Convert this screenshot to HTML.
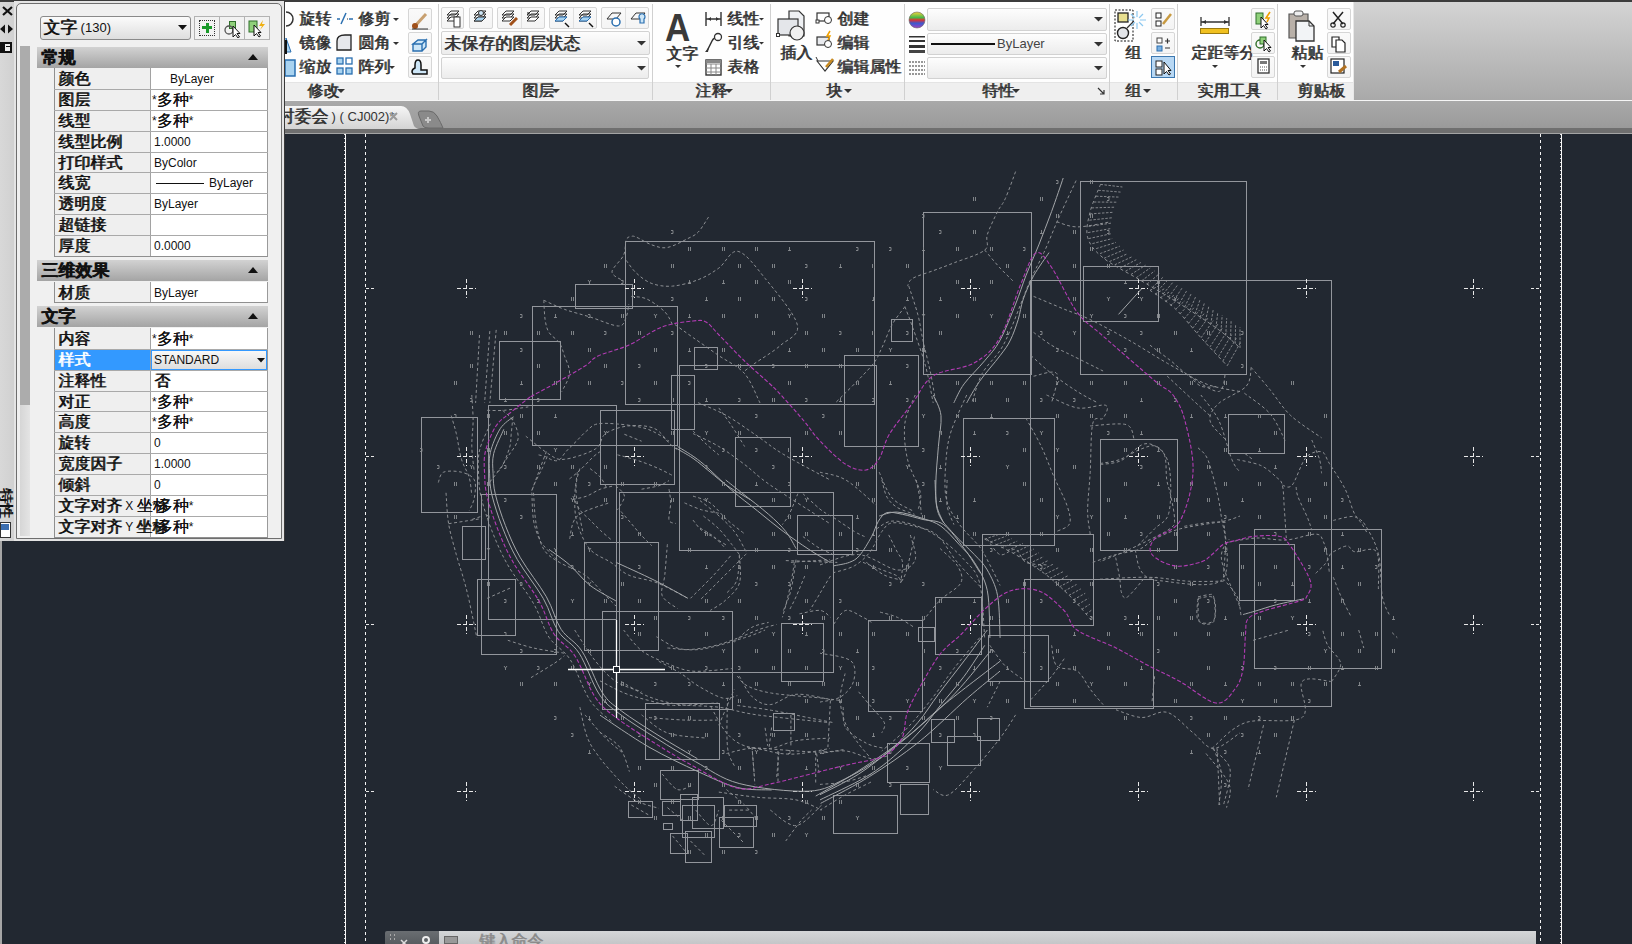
<!DOCTYPE html><html><head><meta charset="utf-8"><style>
*{margin:0;padding:0;box-sizing:border-box}
html,body{width:1632px;height:944px;overflow:hidden;background:#222831;font-family:"Liberation Sans",sans-serif;font-size:12px;color:#222}
.a{position:absolute}
.t{position:absolute;white-space:nowrap;line-height:1}
.c{font-size:1.34em;line-height:0;text-shadow:0.6px 0 0 currentColor;position:relative;top:1px}
</style></head><body>
<div class="a" style="left:0;top:134px;width:1632px;height:810px;background:#222831"></div><svg class="a" style="left:0;top:0" width="1632" height="944" viewBox="0 0 1632 944"><rect x="625.5" y="241.5" width="249" height="163" fill="none" stroke="#93969c" stroke-width="1"/><rect x="575.5" y="284.5" width="57" height="24" fill="none" stroke="#93969c" stroke-width="1"/><rect x="532.5" y="306.5" width="145" height="139" fill="none" stroke="#93969c" stroke-width="1"/><rect x="499.5" y="341.5" width="61" height="58" fill="none" stroke="#93969c" stroke-width="1"/><rect x="421.5" y="417.5" width="56" height="95" fill="none" stroke="#93969c" stroke-width="1"/><rect x="488.5" y="405.5" width="128" height="214" fill="none" stroke="#93969c" stroke-width="1"/><rect x="600.5" y="410.5" width="74" height="74" fill="none" stroke="#93969c" stroke-width="1"/><rect x="694.5" y="347.5" width="23" height="22" fill="none" stroke="#93969c" stroke-width="1"/><rect x="671.5" y="375.5" width="23" height="54" fill="none" stroke="#93969c" stroke-width="1"/><rect x="679.5" y="365.5" width="197" height="185" fill="none" stroke="#93969c" stroke-width="1"/><rect x="735.5" y="437.5" width="55" height="69" fill="none" stroke="#93969c" stroke-width="1"/><rect x="923.5" y="212.5" width="108" height="162" fill="none" stroke="#93969c" stroke-width="1"/><rect x="1080.5" y="181.5" width="166" height="193" fill="none" stroke="#93969c" stroke-width="1"/><rect x="1083.5" y="266.5" width="75" height="55" fill="none" stroke="#93969c" stroke-width="1"/><rect x="1030.5" y="280.5" width="301" height="426" fill="none" stroke="#93969c" stroke-width="1"/><rect x="891.5" y="319.5" width="21" height="22" fill="none" stroke="#93969c" stroke-width="1"/><rect x="844.5" y="355.5" width="74" height="91" fill="none" stroke="#93969c" stroke-width="1"/><rect x="481.5" y="494.5" width="75" height="160" fill="none" stroke="#93969c" stroke-width="1"/><rect x="462.5" y="526.5" width="23" height="33" fill="none" stroke="#93969c" stroke-width="1"/><rect x="477.5" y="579.5" width="38" height="56" fill="none" stroke="#93969c" stroke-width="1"/><rect x="619.5" y="492.5" width="214" height="180" fill="none" stroke="#93969c" stroke-width="1"/><rect x="584.5" y="542.5" width="74" height="108" fill="none" stroke="#93969c" stroke-width="1"/><rect x="602.5" y="611.5" width="130" height="98" fill="none" stroke="#93969c" stroke-width="1"/><rect x="797.5" y="515.5" width="55" height="39" fill="none" stroke="#93969c" stroke-width="1"/><rect x="781.5" y="623.5" width="42" height="58" fill="none" stroke="#93969c" stroke-width="1"/><rect x="963.5" y="418.5" width="91" height="127" fill="none" stroke="#93969c" stroke-width="1"/><rect x="1100.5" y="439.5" width="77" height="111" fill="none" stroke="#93969c" stroke-width="1"/><rect x="982.5" y="534.5" width="111" height="91" fill="none" stroke="#93969c" stroke-width="1"/><rect x="1024.5" y="579.5" width="129" height="129" fill="none" stroke="#93969c" stroke-width="1"/><rect x="935.5" y="597.5" width="46" height="57" fill="none" stroke="#93969c" stroke-width="1"/><rect x="868.5" y="620.5" width="54" height="91" fill="none" stroke="#93969c" stroke-width="1"/><rect x="918.5" y="627.5" width="16" height="14" fill="none" stroke="#93969c" stroke-width="1"/><rect x="988.5" y="635.5" width="60" height="46" fill="none" stroke="#93969c" stroke-width="1"/><rect x="1228.5" y="414.5" width="56" height="39" fill="none" stroke="#93969c" stroke-width="1"/><rect x="1254.5" y="529.5" width="127" height="139" fill="none" stroke="#93969c" stroke-width="1"/><rect x="1239.5" y="544.5" width="55" height="56" fill="none" stroke="#93969c" stroke-width="1"/><rect x="645.5" y="703.5" width="74" height="56" fill="none" stroke="#93969c" stroke-width="1"/><rect x="773.5" y="713.5" width="21" height="17" fill="none" stroke="#93969c" stroke-width="1"/><rect x="660.5" y="770.5" width="38" height="29" fill="none" stroke="#93969c" stroke-width="1"/><rect x="628.5" y="801.5" width="24" height="16" fill="none" stroke="#93969c" stroke-width="1"/><rect x="662.5" y="801.5" width="18" height="14" fill="none" stroke="#93969c" stroke-width="1"/><rect x="680.5" y="794.5" width="17" height="26" fill="none" stroke="#93969c" stroke-width="1"/><rect x="682.5" y="805.5" width="32" height="32" fill="none" stroke="#93969c" stroke-width="1"/><rect x="692.5" y="797.5" width="31" height="31" fill="none" stroke="#93969c" stroke-width="1"/><rect x="724.5" y="805.5" width="32" height="21" fill="none" stroke="#93969c" stroke-width="1"/><rect x="719.5" y="817.5" width="34" height="30" fill="none" stroke="#93969c" stroke-width="1"/><rect x="663.5" y="823.5" width="9" height="6" fill="none" stroke="#93969c" stroke-width="1"/><rect x="670.5" y="833.5" width="17" height="20" fill="none" stroke="#93969c" stroke-width="1"/><rect x="685.5" y="831.5" width="26" height="31" fill="none" stroke="#93969c" stroke-width="1"/><rect x="931.5" y="719.5" width="23" height="23" fill="none" stroke="#93969c" stroke-width="1"/><rect x="977.5" y="718.5" width="22" height="22" fill="none" stroke="#93969c" stroke-width="1"/><rect x="947.5" y="736.5" width="33" height="29" fill="none" stroke="#93969c" stroke-width="1"/><rect x="887.5" y="743.5" width="42" height="39" fill="none" stroke="#93969c" stroke-width="1"/><rect x="900.5" y="784.5" width="28" height="30" fill="none" stroke="#93969c" stroke-width="1"/><rect x="833.5" y="795.5" width="64" height="38" fill="none" stroke="#93969c" stroke-width="1"/><path d="M457 288.5H476M466.5 279V298" stroke="#e8e8e8" stroke-width="1" stroke-dasharray="4 2" fill="none"/><path d="M625 288.5H644M634.5 279V298" stroke="#e8e8e8" stroke-width="1" stroke-dasharray="4 2" fill="none"/><path d="M793 288.5H812M802.5 279V298" stroke="#e8e8e8" stroke-width="1" stroke-dasharray="4 2" fill="none"/><path d="M961 288.5H980M970.5 279V298" stroke="#e8e8e8" stroke-width="1" stroke-dasharray="4 2" fill="none"/><path d="M1129 288.5H1148M1138.5 279V298" stroke="#e8e8e8" stroke-width="1" stroke-dasharray="4 2" fill="none"/><path d="M1297 288.5H1316M1306.5 279V298" stroke="#e8e8e8" stroke-width="1" stroke-dasharray="4 2" fill="none"/><path d="M1464 288.5H1483M1473.5 279V298" stroke="#e8e8e8" stroke-width="1" stroke-dasharray="4 2" fill="none"/><path d="M457 456.5H476M466.5 447V466" stroke="#e8e8e8" stroke-width="1" stroke-dasharray="4 2" fill="none"/><path d="M625 456.5H644M634.5 447V466" stroke="#e8e8e8" stroke-width="1" stroke-dasharray="4 2" fill="none"/><path d="M793 456.5H812M802.5 447V466" stroke="#e8e8e8" stroke-width="1" stroke-dasharray="4 2" fill="none"/><path d="M961 456.5H980M970.5 447V466" stroke="#e8e8e8" stroke-width="1" stroke-dasharray="4 2" fill="none"/><path d="M1129 456.5H1148M1138.5 447V466" stroke="#e8e8e8" stroke-width="1" stroke-dasharray="4 2" fill="none"/><path d="M1297 456.5H1316M1306.5 447V466" stroke="#e8e8e8" stroke-width="1" stroke-dasharray="4 2" fill="none"/><path d="M1464 456.5H1483M1473.5 447V466" stroke="#e8e8e8" stroke-width="1" stroke-dasharray="4 2" fill="none"/><path d="M457 624.5H476M466.5 615V634" stroke="#e8e8e8" stroke-width="1" stroke-dasharray="4 2" fill="none"/><path d="M625 624.5H644M634.5 615V634" stroke="#e8e8e8" stroke-width="1" stroke-dasharray="4 2" fill="none"/><path d="M793 624.5H812M802.5 615V634" stroke="#e8e8e8" stroke-width="1" stroke-dasharray="4 2" fill="none"/><path d="M961 624.5H980M970.5 615V634" stroke="#e8e8e8" stroke-width="1" stroke-dasharray="4 2" fill="none"/><path d="M1129 624.5H1148M1138.5 615V634" stroke="#e8e8e8" stroke-width="1" stroke-dasharray="4 2" fill="none"/><path d="M1297 624.5H1316M1306.5 615V634" stroke="#e8e8e8" stroke-width="1" stroke-dasharray="4 2" fill="none"/><path d="M1464 624.5H1483M1473.5 615V634" stroke="#e8e8e8" stroke-width="1" stroke-dasharray="4 2" fill="none"/><path d="M457 791.5H476M466.5 782V801" stroke="#e8e8e8" stroke-width="1" stroke-dasharray="4 2" fill="none"/><path d="M625 791.5H644M634.5 782V801" stroke="#e8e8e8" stroke-width="1" stroke-dasharray="4 2" fill="none"/><path d="M793 791.5H812M802.5 782V801" stroke="#e8e8e8" stroke-width="1" stroke-dasharray="4 2" fill="none"/><path d="M961 791.5H980M970.5 782V801" stroke="#e8e8e8" stroke-width="1" stroke-dasharray="4 2" fill="none"/><path d="M1129 791.5H1148M1138.5 782V801" stroke="#e8e8e8" stroke-width="1" stroke-dasharray="4 2" fill="none"/><path d="M1297 791.5H1316M1306.5 782V801" stroke="#e8e8e8" stroke-width="1" stroke-dasharray="4 2" fill="none"/><path d="M1464 791.5H1483M1473.5 782V801" stroke="#e8e8e8" stroke-width="1" stroke-dasharray="4 2" fill="none"/><path d="M366 288.5H375M1531 288.5H1540" stroke="#e8e8e8" stroke-width="1" stroke-dasharray="3 2" fill="none"/><path d="M366 456.5H375M1531 456.5H1540" stroke="#e8e8e8" stroke-width="1" stroke-dasharray="3 2" fill="none"/><path d="M366 624.5H375M1531 624.5H1540" stroke="#e8e8e8" stroke-width="1" stroke-dasharray="3 2" fill="none"/><path d="M366 791.5H375M1531 791.5H1540" stroke="#e8e8e8" stroke-width="1" stroke-dasharray="3 2" fill="none"/><path d="M345.5 134V944M1561.5 134V944" stroke="#f8f8f8" stroke-width="1"/><path d="M344.5 134V944M1560.5 134V944" stroke="#e0e0e0" stroke-width="1" stroke-dasharray="1 3"/><path d="M365.5 134V944M1540.5 134V944" stroke="#f4f4f4" stroke-width="1" stroke-dasharray="3 3"/><path d="M708.5 217.1 C706.8 219.6 701.7 228.5 698.2 232.1 C694.8 235.6 693.1 235.9 687.9 238.5 C682.8 241.1 673.4 246.4 667.4 247.5 C661.3 248.6 657.1 246.6 651.9 244.9 C646.8 243.2 639.9 238.6 636.5 237.2 C633.0 235.8 633.0 236.0 631.3 236.4 C629.6 236.9 627.5 236.6 626.2 239.8 C624.9 242.9 626.0 249.9 623.6 255.2 C621.2 260.6 612.0 267.7 612.0 271.9 C612.0 276.2 621.7 279.5 623.6 281.0" fill="none" stroke="#8d9094" stroke-width="1" stroke-dasharray="3 2.5"/><path d="M626.2 260.4 C627.9 262.5 632.2 269.4 636.5 273.2 C640.8 277.1 645.9 281.4 651.9 283.5 C657.9 285.7 664.8 286.7 672.5 286.1 C680.2 285.5 690.5 282.7 698.2 279.7 C706.0 276.7 712.2 272.8 718.8 268.1 C725.5 263.4 730.4 249.6 738.1 251.4 C745.8 253.1 755.3 266.2 765.1 278.4 C775.0 290.6 794.7 313.6 797.3 324.7 C799.9 335.9 787.7 338.9 780.6 345.3 C773.5 351.7 760.9 359.0 754.9 363.3 C748.8 367.6 746.3 369.7 744.6 371.0" fill="none" stroke="#8d9094" stroke-width="1" stroke-dasharray="3 2.5"/><path d="M543.8 300.3 C547.3 301.8 556.7 306.5 564.4 309.3 C572.1 312.1 581.1 314.2 590.1 317.0 C599.2 319.8 612.5 326.0 618.5 326.0 C624.5 326.0 624.5 320.6 626.2 317.0 C627.9 313.3 628.3 306.3 628.8 304.1" fill="none" stroke="#8d9094" stroke-width="1" stroke-dasharray="3 2.5"/><path d="M543.8 300.3 C544.0 303.5 544.3 314.2 545.1 319.6 C546.0 324.9 546.6 328.6 549.0 332.4 C551.3 336.3 556.7 338.9 559.3 342.7 C561.8 346.6 562.7 350.4 564.4 355.6 C566.1 360.7 570.0 367.6 569.6 373.6 C569.1 379.6 563.1 388.6 561.8 391.6" fill="none" stroke="#8d9094" stroke-width="1" stroke-dasharray="3 2.5"/><path d="M479.5 335.0 L475.6 402.9" fill="none" stroke="#8d9094" stroke-width="1" stroke-dasharray="3 2.5"/><path d="M489.8 331.1 L484.6 402.9" fill="none" stroke="#8d9094" stroke-width="1" stroke-dasharray="3 2.5"/><path d="M496.2 329.9 C495.6 337.1 493.4 361.4 492.4 373.6 C491.3 385.8 490.2 398.1 489.8 402.9" fill="none" stroke="#8d9094" stroke-width="1" stroke-dasharray="3 2.5"/><path d="M675.1 324.7 C678.1 326.9 685.8 332.4 693.1 337.6 C700.4 342.7 710.2 349.6 718.8 355.6 C727.4 361.6 737.7 365.7 744.6 373.6 C751.4 381.5 757.4 398.1 760.0 402.9" fill="none" stroke="#8d9094" stroke-width="1" stroke-dasharray="3 2.5"/><path d="M631.3 296.4 C633.9 296.8 641.2 296.4 646.8 299.0 C652.3 301.5 660.5 307.5 664.8 311.8 C669.1 316.1 671.2 322.6 672.5 324.7" fill="none" stroke="#8d9094" stroke-width="1" stroke-dasharray="3 2.5"/><path d="M1063.2 178.0 C1061.3 183.6 1055.7 200.3 1051.6 211.5 C1047.5 222.6 1043.0 234.2 1038.8 244.9 C1034.5 255.6 1029.7 265.9 1025.9 275.8 C1022.0 285.7 1019.9 293.4 1015.6 304.1 C1011.3 314.8 1005.3 330.7 1000.1 340.1 C995.0 349.6 990.7 353.4 984.7 360.7 C978.7 368.0 969.3 376.9 964.1 383.9 C959.0 390.9 955.5 399.8 953.8 402.9" fill="none" stroke="#a4a7aa" stroke-width="1"/><path d="M1049.0 252.6 C1046.5 256.5 1037.9 268.1 1033.6 275.8 C1029.3 283.5 1025.9 291.7 1023.3 299.0 C1020.7 306.3 1020.3 312.7 1018.2 319.6 C1016.0 326.4 1013.4 334.1 1010.4 340.1 C1007.4 346.2 1005.3 348.7 1000.1 355.6 C995.0 362.5 985.1 373.4 979.6 381.3 C974.0 389.2 968.8 399.3 966.7 402.9" fill="none" stroke="#a4a7aa" stroke-width="1"/><path d="M1076.1 180.6 C1073.3 186.6 1064.7 204.6 1059.3 216.6 C1054.0 228.6 1048.6 242.4 1043.9 252.6 C1039.2 262.9 1034.9 269.8 1031.0 278.4 C1027.2 287.0 1024.2 295.5 1020.7 304.1 C1017.3 312.7 1013.9 322.1 1010.4 329.9 C1007.0 337.6 1004.9 343.1 1000.1 350.4 C995.4 357.7 986.9 364.9 982.1 373.6 C977.4 382.4 973.6 398.1 971.8 402.9" fill="none" stroke="#8d9094" stroke-width="1" stroke-dasharray="3 2.5"/><path d="M1015.6 171.6 C1013.9 176.1 1008.3 192.0 1005.3 198.6 C1002.3 205.3 1000.6 205.5 997.6 211.5 C994.6 217.5 989.4 228.2 987.3 234.6 C985.1 241.1 990.3 245.4 984.7 250.1 C979.1 254.8 962.4 259.5 953.8 262.9 C945.2 266.4 940.1 268.1 933.2 270.7 C926.4 273.2 916.9 275.8 912.6 278.4 C908.4 281.0 908.4 284.8 907.5 286.1" fill="none" stroke="#8d9094" stroke-width="1" stroke-dasharray="3 2.5"/><path d="M984.7 250.1 C987.3 253.1 995.4 262.9 1000.1 268.1 C1004.9 273.2 1010.9 278.8 1013.0 281.0" fill="none" stroke="#8d9094" stroke-width="1" stroke-dasharray="3 2.5"/><path d="M908.8 286.1 C910.3 290.8 915.4 305.4 917.8 314.4 C920.2 323.4 920.8 330.3 922.9 340.1 C925.1 350.0 928.5 363.1 930.7 373.6 C932.8 384.1 935.0 398.1 935.8 402.9" fill="none" stroke="#8d9094" stroke-width="1" stroke-dasharray="3 2.5"/><path d="M904.9 306.7 C906.2 310.1 909.2 317.4 912.6 327.3 C916.1 337.1 922.1 353.3 925.5 365.9 C928.9 378.5 931.9 396.8 933.2 402.9" fill="none" stroke="#8d9094" stroke-width="1" stroke-dasharray="3 2.5"/><path d="M904.9 306.7 C902.8 309.7 895.9 317.8 892.1 324.7 C888.2 331.6 885.2 341.0 881.8 347.9 C878.3 354.7 879.2 356.7 871.5 365.9 C863.8 375.1 841.4 396.8 835.4 402.9" fill="none" stroke="#8d9094" stroke-width="1" stroke-dasharray="3 2.5"/><path d="M1033.6 296.4 C1038.8 298.5 1055.0 305.4 1064.5 309.3 C1073.9 313.1 1079.5 314.4 1090.2 319.6 C1100.9 324.7 1116.0 332.9 1128.8 340.1 C1141.7 347.4 1154.6 356.0 1167.4 363.3 C1180.3 370.6 1193.9 379.2 1206.0 383.9 C1218.1 388.6 1234.3 390.3 1240.0 391.6" fill="none" stroke="#8d9094" stroke-width="1" stroke-dasharray="3 2.5"/><path d="M1056.8 221.8 C1060.2 222.6 1068.3 226.9 1077.4 226.9 C1086.4 226.9 1105.2 222.6 1110.8 221.8" fill="none" stroke="#8d9094" stroke-width="1" stroke-dasharray="3 2.5"/><path d="M1033.6 332.4 C1036.6 334.6 1045.2 341.4 1051.6 345.3 C1058.1 349.2 1063.6 351.3 1072.2 355.6 C1080.8 359.9 1097.9 368.5 1103.1 371.0" fill="none" stroke="#8d9094" stroke-width="1" stroke-dasharray="3 2.5"/><path d="M1031.0 355.6 C1034.5 358.6 1043.9 367.6 1051.6 373.6 C1059.3 379.6 1069.6 386.7 1077.4 391.6 C1085.1 396.5 1094.5 401.1 1097.9 402.9" fill="none" stroke="#8d9094" stroke-width="1" stroke-dasharray="3 2.5"/><path d="M1033.6 376.2 C1037.5 375.7 1053.8 369.1 1056.8 373.6 C1059.8 378.1 1052.5 398.1 1051.6 402.9" fill="none" stroke="#8d9094" stroke-width="1" stroke-dasharray="3 2.5"/><path d="M1118.5 314.4 L1141.7 288.7" fill="none" stroke="#a4a7aa" stroke-width="1"/><path d="M1100.5 184.4L1122.4 187.0M1098.3 190.3L1120.5 192.1M1096.0 196.2L1118.7 197.1M1093.8 202.0L1116.8 202.2M1091.6 207.9L1114.9 207.2M1090.0 213.9L1113.3 212.3M1089.4 220.2L1112.8 217.7M1088.7 226.4L1112.2 223.0M1088.1 232.6L1111.7 228.4M1088.7 238.6L1111.2 233.7M1092.4 243.6L1112.2 238.6M1096.2 248.6L1116.0 242.4M1100.0 253.6L1119.8 246.2M1104.0 258.3L1123.6 250.0M1109.4 261.6L1127.4 253.8M1114.7 264.8L1131.7 256.9M1120.1 268.0L1136.3 259.7M1125.5 271.2L1140.9 262.5M1130.9 274.5L1145.5 265.2M1136.3 277.7L1150.2 268.0M1141.6 280.9L1154.8 270.8M1147.0 284.2L1159.4 273.6M1152.4 287.4L1164.0 276.3M1157.8 290.6L1168.6 279.2M1163.2 293.8L1173.1 282.1M1168.5 297.1L1177.5 285.1M1173.9 300.3L1182.0 288.1M1179.3 303.5L1186.5 291.1M1184.6 307.0L1191.0 294.1M1189.8 310.4L1195.5 297.1M1195.0 313.9L1199.9 300.1M1200.2 317.4L1204.4 303.0M1205.4 320.9L1208.9 306.1M1210.7 324.4L1213.3 309.1M1215.9 327.8L1217.8 312.1M1220.9 331.6L1222.2 315.2M1225.7 335.6L1226.7 318.2M1230.5 339.7L1231.1 321.2M1235.2 343.8L1235.6 324.2M1240.0 347.9L1240.0 327.3" fill="none" stroke="#8d9094" stroke-width="0.9" stroke-dasharray="2.5 1.5"/><path d="M1100.5 184.4 C1098.8 189.0 1092.4 202.7 1090.2 211.5 C1088.1 220.3 1085.5 229.5 1087.6 237.2 C1089.8 244.9 1094.1 250.5 1103.1 257.8 C1112.1 265.1 1128.8 273.2 1141.7 281.0 C1154.6 288.7 1167.4 296.0 1180.3 304.1 C1193.2 312.3 1208.9 322.6 1218.9 329.9 C1228.8 337.1 1236.5 344.9 1240.0 347.9" fill="none" stroke="#8d9094" stroke-width="1" stroke-dasharray="3 3"/><path d="M471.8 395.0 C472.0 399.3 473.1 412.2 473.1 420.7 C473.1 429.3 471.6 437.9 471.8 446.5 C472.0 455.0 473.9 467.9 474.3 472.2" fill="none" stroke="#8d9094" stroke-width="1" stroke-dasharray="3 2.5"/><path d="M451.2 415.6 C452.0 418.6 454.6 426.3 456.3 433.6 C458.0 440.9 459.3 452.0 461.5 459.3 C463.6 466.6 467.5 471.3 469.2 477.4 C470.9 483.4 471.3 492.4 471.8 495.4" fill="none" stroke="#8d9094" stroke-width="1" stroke-dasharray="3 2.5"/><path d="M438.3 482.5 C439.2 480.8 439.6 473.9 443.5 472.2 C447.3 470.5 456.3 470.9 461.5 472.2 C466.6 473.5 472.2 475.6 474.3 479.9 C476.5 484.2 475.2 492.8 474.3 497.9 C473.5 503.1 470.0 508.7 469.2 510.8" fill="none" stroke="#8d9094" stroke-width="1" stroke-dasharray="3 2.5"/><path d="M448.6 523.7 L482.1 518.5" fill="none" stroke="#8d9094" stroke-width="1" stroke-dasharray="3 2.5"/><path d="M446.0 492.8 C446.5 497.9 446.9 513.4 448.6 523.7 C450.3 534.0 453.8 545.1 456.3 554.6 C458.9 564.0 461.9 572.6 464.0 580.3 C466.2 588.0 467.0 591.3 469.2 600.9 C471.3 610.5 475.6 631.8 476.9 637.9" fill="none" stroke="#8d9094" stroke-width="1" stroke-dasharray="3 2.5"/><path d="M502.6 410.4 C504.4 412.2 510.4 416.0 512.9 420.7 C515.5 425.5 518.9 432.7 518.1 438.8 C517.2 444.8 511.2 451.2 507.8 456.8 C504.4 462.3 500.9 467.5 497.5 472.2 C494.1 476.9 488.9 482.9 487.2 485.1" fill="none" stroke="#8d9094" stroke-width="1" stroke-dasharray="3 2.5"/><path d="M546.4 451.6 C545.1 455.0 541.2 465.3 538.7 472.2 C536.1 479.1 532.2 489.4 531.0 492.8" fill="none" stroke="#8d9094" stroke-width="1" stroke-dasharray="3 2.5"/><path d="M525.8 436.2 C529.7 439.2 542.5 450.3 549.0 454.2 C555.4 458.1 556.7 460.2 564.4 459.3 C572.1 458.5 588.4 453.3 595.3 449.0 C602.2 444.8 600.0 437.5 605.6 433.6 C611.2 429.7 620.6 426.7 628.8 425.9 C636.9 425.0 647.6 425.5 654.5 428.5 C661.3 431.5 665.6 440.0 669.9 443.9 C674.2 447.8 678.5 450.3 680.2 451.6" fill="none" stroke="#8d9094" stroke-width="1" stroke-dasharray="3 2.5"/><path d="M577.3 472.2 C576.9 476.5 574.7 489.4 574.7 497.9 C574.7 506.5 574.7 515.1 577.3 523.7 C579.9 532.3 584.6 543.0 590.1 549.4 C595.7 555.8 604.3 558.0 610.7 562.3 C617.2 566.6 621.0 571.7 628.8 575.1 C636.5 578.6 647.2 579.0 657.1 582.9 C666.9 586.7 682.8 595.7 687.9 598.3" fill="none" stroke="#8d9094" stroke-width="1" stroke-dasharray="3 2.5"/><path d="M533.5 492.8 C534.0 497.9 534.4 514.2 536.1 523.7 C537.8 533.1 540.0 543.0 543.8 549.4 C547.7 555.8 552.4 558.0 559.3 562.3 C566.1 566.6 577.3 569.6 585.0 575.1 C592.7 580.7 600.4 590.6 605.6 595.7 C610.7 600.9 614.2 604.3 615.9 606.0" fill="none" stroke="#8d9094" stroke-width="1" stroke-dasharray="3 2.5"/><path d="M608.2 503.1 C603.0 505.2 583.7 510.0 577.3 516.0 C570.8 522.0 570.8 535.3 569.6 539.1" fill="none" stroke="#8d9094" stroke-width="1" stroke-dasharray="3 2.5"/><path d="M693.1 433.6 C697.4 435.7 710.2 441.3 718.8 446.5 C727.4 451.6 736.0 458.1 744.6 464.5 C753.1 470.9 756.1 475.2 770.3 485.1 C784.5 494.9 820.0 517.2 830.0 523.7" fill="none" stroke="#8d9094" stroke-width="1" stroke-dasharray="3 2.5"/><path d="M698.2 402.7 C703.0 404.9 716.7 410.0 726.5 415.6 C736.4 421.2 748.0 429.7 757.4 436.2 C766.9 442.6 771.1 446.9 783.2 454.2 C795.3 461.5 822.2 475.6 830.0 479.9" fill="none" stroke="#8d9094" stroke-width="1" stroke-dasharray="3 2.5"/><path d="M667.4 544.3 C666.9 549.4 665.6 566.6 664.8 575.1 C663.9 583.7 660.1 590.2 662.2 595.7 C664.4 601.3 675.1 606.5 677.6 608.6" fill="none" stroke="#8d9094" stroke-width="1" stroke-dasharray="3 2.5"/><path d="M739.4 554.6 C739.0 558.8 739.0 573.9 736.8 580.3 C734.7 586.7 728.3 591.0 726.5 593.2" fill="none" stroke="#8d9094" stroke-width="1" stroke-dasharray="3 2.5"/><path d="M796.0 559.7 C795.2 564.9 793.0 582.0 790.9 590.6 C788.7 599.2 784.4 607.7 783.2 611.2" fill="none" stroke="#8d9094" stroke-width="1" stroke-dasharray="3 2.5"/><path d="M790.9 562.3 L830.0 559.7" fill="none" stroke="#8d9094" stroke-width="1" stroke-dasharray="3 2.5"/><path d="M703.4 516.0 C706.0 518.1 714.1 524.1 718.8 528.8 C723.5 533.5 728.3 540.0 731.7 544.3 C735.1 548.6 738.1 552.8 739.4 554.6" fill="none" stroke="#8d9094" stroke-width="1" stroke-dasharray="3 2.5"/><path d="M487.2 598.3 L510.4 588.0" fill="none" stroke="#8d9094" stroke-width="1" stroke-dasharray="3 2.5"/><path d="M690.5 598.3 C694.4 594.4 706.8 582.4 713.7 575.1 C720.5 567.9 728.7 558.0 731.7 554.6" fill="none" stroke="#8d9094" stroke-width="1" stroke-dasharray="3 2.5"/><path d="M718.8 407.9 C721.0 410.9 727.4 419.4 731.7 425.9 C736.0 432.3 742.4 443.0 744.6 446.5" fill="none" stroke="#8d9094" stroke-width="1" stroke-dasharray="3 2.5"/><path d="M677.6 446.5 C681.5 449.0 691.8 454.6 700.8 461.9 C709.8 469.2 722.3 482.1 731.7 490.2 C741.1 498.4 748.8 503.9 757.4 510.8 C766.0 517.7 774.6 525.0 783.2 531.4 C791.7 537.8 801.1 544.3 808.9 549.4 C816.7 554.6 826.5 560.1 830.0 562.3" fill="none" stroke="#a4a7aa" stroke-width="1"/><path d="M549.0 549.4 C552.4 552.0 562.7 558.8 569.6 564.9 C576.4 570.9 582.4 579.4 590.1 585.4 C597.9 591.4 611.6 598.3 615.9 600.9" fill="none" stroke="#a4a7aa" stroke-width="1"/><path d="M615.9 562.3 C622.3 565.3 642.5 574.3 654.5 580.3 C666.5 586.3 682.4 595.3 687.9 598.3" fill="none" stroke="#a4a7aa" stroke-width="1"/><path d="M933.2 395.0 C934.5 398.4 940.1 407.0 941.0 415.6 C941.8 424.2 939.2 434.9 938.4 446.5 C937.5 458.1 935.8 473.9 935.8 485.1 C935.8 496.2 935.4 505.2 938.4 513.4 C941.4 521.5 947.8 527.1 953.8 534.0 C959.8 540.8 968.8 548.6 974.4 554.6 C980.0 560.6 983.4 563.1 987.3 570.0 C991.1 576.9 995.4 584.4 997.6 595.7 C999.7 607.1 999.7 630.9 1000.1 637.9" fill="none" stroke="#a4a7aa" stroke-width="1"/><path d="M879.2 516.0 C882.2 515.3 889.9 511.7 897.2 512.1 C904.5 512.5 915.6 516.2 922.9 518.5 C930.2 520.9 935.0 522.0 941.0 526.2 C947.0 530.5 953.4 538.3 959.0 544.3 C964.5 550.3 969.7 554.6 974.4 562.3 C979.1 570.0 984.7 578.0 987.3 590.6 C989.9 603.2 989.4 630.0 989.9 637.9" fill="none" stroke="#a4a7aa" stroke-width="1"/><path d="M966.7 395.0 C964.1 401.0 954.7 420.3 951.2 431.0 C947.8 441.8 947.0 448.2 946.1 459.3 C945.2 470.5 944.0 487.2 946.1 497.9 C948.2 508.7 953.4 515.5 959.0 523.7 C964.5 531.8 974.4 540.0 979.6 546.8 C984.7 553.7 986.4 558.4 989.9 564.9 C993.3 571.3 998.4 582.0 1000.1 585.4" fill="none" stroke="#8d9094" stroke-width="1" stroke-dasharray="3 2.5"/><path d="M876.6 528.8 C879.2 527.5 885.2 521.5 892.1 521.1 C898.9 520.7 909.6 523.2 917.8 526.2 C925.9 529.3 933.2 533.5 941.0 539.1 C948.7 544.7 957.7 552.4 964.1 559.7 C970.6 567.0 976.1 569.8 979.6 582.9 C983.0 595.9 983.8 628.8 984.7 637.9" fill="none" stroke="#8d9094" stroke-width="1" stroke-dasharray="3 2.5"/><path d="M915.2 395.0 C913.5 399.7 906.2 412.6 904.9 423.3 C903.6 434.0 904.9 447.8 907.5 459.3 C910.1 470.9 918.7 484.2 920.4 492.8 C922.1 501.4 918.2 507.8 917.8 510.8" fill="none" stroke="#8d9094" stroke-width="1" stroke-dasharray="3 2.5"/><path d="M879.2 472.2 C881.3 476.5 886.5 491.5 892.1 497.9 C897.6 504.4 909.2 508.7 912.6 510.8" fill="none" stroke="#8d9094" stroke-width="1" stroke-dasharray="3 2.5"/><path d="M820.0 472.2 C824.3 473.5 836.3 474.4 845.7 479.9 C855.2 485.5 871.5 501.4 876.6 505.7" fill="none" stroke="#8d9094" stroke-width="1" stroke-dasharray="3 2.5"/><path d="M1046.5 395.0 C1051.6 397.1 1067.5 406.2 1077.4 407.9 C1087.2 409.6 1101.4 403.6 1105.7 405.3 C1110.0 407.0 1105.2 415.2 1103.1 418.2 C1100.9 421.2 1094.9 414.3 1092.8 423.3 C1090.6 432.3 1091.1 457.6 1090.2 472.2 C1089.4 486.8 1087.6 500.5 1087.6 510.8 C1087.6 521.1 1089.8 530.1 1090.2 534.0" fill="none" stroke="#8d9094" stroke-width="1" stroke-dasharray="3 2.5"/><path d="M1090.2 425.9 C1096.2 425.7 1119.0 422.5 1126.2 424.6 C1133.5 426.7 1132.7 436.4 1134.0 438.8" fill="none" stroke="#8d9094" stroke-width="1" stroke-dasharray="3 2.5"/><path d="M1100.5 464.5 C1103.9 463.8 1113.8 464.1 1121.1 460.6 C1128.4 457.2 1137.4 445.4 1144.3 443.9 C1151.1 442.4 1158.0 446.9 1162.3 451.6 C1166.6 456.3 1168.9 461.9 1170.0 472.2 C1171.1 482.5 1171.3 503.9 1168.7 513.4 C1166.1 522.8 1159.9 523.2 1154.6 528.8 C1149.2 534.4 1139.5 543.8 1136.5 546.8" fill="none" stroke="#8d9094" stroke-width="1" stroke-dasharray="3 2.5"/><path d="M1025.9 418.2 C1028.5 422.9 1036.6 436.6 1041.3 446.5 C1046.0 456.3 1049.9 467.5 1054.2 477.4 C1058.5 487.2 1064.5 497.9 1067.1 505.7 C1069.6 513.4 1071.3 519.4 1069.6 523.7 C1067.9 528.0 1058.9 530.1 1056.8 531.4" fill="none" stroke="#8d9094" stroke-width="1" stroke-dasharray="3 2.5"/><path d="M1200.9 395.0 C1203.9 399.3 1213.8 410.0 1218.9 420.7 C1224.0 431.5 1228.2 450.8 1231.8 459.3 C1235.3 467.9 1238.6 470.1 1240.0 472.2" fill="none" stroke="#8d9094" stroke-width="1" stroke-dasharray="3 2.5"/><path d="M1092.8 562.3 C1096.7 561.0 1108.2 556.7 1116.0 554.6 C1123.7 552.4 1132.7 552.0 1139.1 549.4 C1145.6 546.8 1147.7 542.5 1154.6 539.1 C1161.4 535.7 1168.7 531.8 1180.3 528.8 C1191.9 525.8 1214.1 523.2 1224.0 521.1 C1234.0 519.0 1237.3 516.8 1240.0 516.0" fill="none" stroke="#8d9094" stroke-width="1" stroke-dasharray="3 2.5"/><path d="M1154.6 580.3 C1165.7 580.3 1209.9 590.2 1221.5 580.3 C1233.1 570.4 1223.6 531.0 1224.0 521.1" fill="none" stroke="#8d9094" stroke-width="1" stroke-dasharray="3 2.5"/><path d="M1198.3 598.3 C1200.9 598.3 1211.2 594.4 1213.8 598.3 C1216.3 602.2 1216.1 617.6 1213.8 621.5 C1211.4 625.3 1202.2 625.3 1199.6 621.5 C1197.0 617.6 1198.5 602.2 1198.3 598.3" fill="none" stroke="#8d9094" stroke-width="1" stroke-dasharray="3 2.5"/><path d="M1239.5 606.0 C1236.5 598.3 1223.2 570.9 1221.5 559.7 C1219.8 548.6 1227.9 542.5 1229.2 539.1" fill="none" stroke="#8d9094" stroke-width="1" stroke-dasharray="3 2.5"/><path d="M820.0 564.9 C826.4 563.1 845.7 553.7 858.6 554.6 C871.5 555.4 887.8 569.1 897.2 570.0 C906.6 570.9 913.1 565.7 915.2 559.7 C917.4 553.7 910.9 538.3 910.1 534.0" fill="none" stroke="#8d9094" stroke-width="1" stroke-dasharray="3 2.5"/><path d="M987.3 539.1 C989.4 541.7 995.4 552.8 1000.1 554.6 C1004.9 556.3 1011.3 548.1 1015.6 549.4 C1019.9 550.7 1020.7 559.7 1025.9 562.3 C1031.0 564.9 1043.0 564.4 1046.5 564.9" fill="none" stroke="#8d9094" stroke-width="1" stroke-dasharray="3 2.5"/><path d="M866.3 562.3 C869.3 564.4 878.3 572.1 884.3 575.1 C890.3 578.1 899.4 579.4 902.4 580.3" fill="none" stroke="#8d9094" stroke-width="1" stroke-dasharray="3 2.5"/><path d="M984.7 539.1L1000.1 534.0M990.4 542.0L1005.8 536.3M996.1 544.8L1011.5 538.7M1001.8 547.7L1017.2 541.1M1007.5 550.5L1022.9 543.5M1013.2 553.3L1028.6 545.8M1018.6 556.6L1033.9 549.0M1023.9 560.1L1038.8 552.8M1029.2 563.6L1043.7 556.6M1034.5 567.2L1048.6 560.3M1039.8 570.7L1053.4 564.1M1045.1 574.2L1058.3 567.8M1050.0 578.3L1063.2 571.6M1054.7 582.6L1067.7 575.8M1059.4 586.8L1072.1 580.2M1064.2 591.1L1076.5 584.5M1068.9 595.3L1080.8 588.9M1073.5 599.7L1085.2 593.3M1077.7 604.5L1088.3 598.4M1081.8 609.3L1089.8 604.3M1086.0 614.1L1091.3 610.3M1090.2 618.9L1092.8 616.3" fill="none" stroke="#8d9094" stroke-width="0.9" stroke-dasharray="2.5 1.5"/><path d="M984.7 539.1 C989.9 541.7 1005.3 548.6 1015.6 554.6 C1025.9 560.6 1037.0 567.9 1046.5 575.1 C1055.9 582.4 1064.9 591.0 1072.2 598.3 C1079.5 605.6 1087.2 615.5 1090.2 618.9" fill="none" stroke="#8d9094" stroke-width="1" stroke-dasharray="3 3"/><path d="M1251.2 367.5 C1254.4 371.2 1263.5 381.8 1270.1 389.8 C1276.7 397.8 1282.1 407.5 1290.7 415.5 C1299.3 423.5 1316.4 434.1 1321.6 437.8" fill="none" stroke="#8d9094" stroke-width="1" stroke-dasharray="3 2.5"/><path d="M1251.2 367.5 C1250.4 370.6 1251.5 380.4 1246.1 386.4 C1240.6 392.4 1224.6 397.8 1218.6 403.5 C1212.6 409.2 1208.9 414.7 1210.0 420.7 C1211.2 426.7 1222.9 436.4 1225.5 439.6" fill="none" stroke="#8d9094" stroke-width="1" stroke-dasharray="3 2.5"/><path d="M1150.0 345.2 C1153.4 347.8 1164.0 355.5 1170.6 360.6 C1177.2 365.8 1181.5 370.9 1189.5 376.1 C1197.5 381.2 1212.6 392.1 1218.6 391.5 C1224.6 390.9 1224.3 375.8 1225.5 372.6" fill="none" stroke="#8d9094" stroke-width="1" stroke-dasharray="3 2.5"/><path d="M1189.5 376.1 C1191.5 377.8 1196.6 384.7 1201.5 386.4 C1206.3 388.1 1215.8 386.4 1218.6 386.4" fill="none" stroke="#8d9094" stroke-width="1" stroke-dasharray="3 2.5"/><path d="M1244.4 393.2 C1248.7 396.7 1263.2 405.8 1270.1 413.8 C1277.0 421.8 1283.0 436.7 1285.5 441.3" fill="none" stroke="#8d9094" stroke-width="1" stroke-dasharray="3 2.5"/><path d="M1167.2 376.1 C1171.4 380.1 1185.5 393.2 1192.9 400.1 C1200.3 407.0 1208.6 414.4 1211.8 417.3" fill="none" stroke="#8d9094" stroke-width="1" stroke-dasharray="3 2.5"/><path d="M600.0 715.2 C608.2 720.5 632.7 737.7 649.0 747.1 C665.4 756.5 683.3 764.8 698.0 771.6 C712.7 778.3 725.0 784.4 737.3 787.5 C749.5 790.6 765.8 789.5 771.6 790.0" fill="none" stroke="#a4a7aa" stroke-width="1"/><path d="M815.7 796.1 C822.6 792.0 842.2 781.4 857.4 771.6 C872.5 761.8 892.1 748.3 906.4 737.3 C920.7 726.2 927.5 718.1 943.1 705.4 C958.7 692.7 990.5 668.6 1000.0 661.3" fill="none" stroke="#a4a7aa" stroke-width="1"/><path d="M820.6 803.4 C828.8 798.9 853.3 786.7 869.6 776.5 C885.9 766.3 902.3 755.2 918.6 742.2 C935.0 729.1 954.1 709.9 967.6 698.0 C981.2 686.2 994.6 675.6 1000.0 671.1" fill="none" stroke="#a4a7aa" stroke-width="1"/><path d="M656.4 636.8 C660.5 638.8 671.9 647.4 680.9 649.0 C689.9 650.7 701.3 648.2 710.3 646.6 C719.3 644.9 726.6 642.1 734.8 639.2 C743.0 636.4 752.4 631.9 759.3 629.4 C766.3 627.0 773.6 625.3 776.5 624.5" fill="none" stroke="#8d9094" stroke-width="1" stroke-dasharray="3 2.5"/><path d="M658.8 661.3 C662.5 663.3 674.3 669.4 680.9 673.5 C687.4 677.6 691.1 681.7 698.0 685.8 C705.0 689.9 716.0 696.4 722.5 698.0 C729.1 699.7 734.8 696.0 737.3 695.6" fill="none" stroke="#8d9094" stroke-width="1" stroke-dasharray="3 2.5"/><path d="M737.3 676.0 C738.9 677.6 741.3 682.9 747.1 685.8 C752.8 688.6 759.3 691.1 771.6 693.1 C783.8 695.2 809.2 696.8 820.6 698.0 C832.0 699.3 836.9 700.1 840.2 700.5" fill="none" stroke="#8d9094" stroke-width="1" stroke-dasharray="3 2.5"/><path d="M600.0 680.9 C604.1 682.9 616.3 689.9 624.5 693.1 C632.7 696.4 640.8 698.4 649.0 700.5 C657.2 702.5 662.1 705.0 673.5 705.4 C685.0 705.8 710.3 703.3 717.6 702.9" fill="none" stroke="#8d9094" stroke-width="1" stroke-dasharray="3 2.5"/><path d="M727.5 698.0 C727.5 706.2 726.2 735.6 727.5 747.1 C728.7 758.5 733.6 763.4 734.8 766.7" fill="none" stroke="#8d9094" stroke-width="1" stroke-dasharray="3 2.5"/><path d="M747.1 747.1 C758.5 747.9 799.3 751.6 815.7 752.0 C832.0 752.4 840.2 749.9 845.1 749.5" fill="none" stroke="#8d9094" stroke-width="1" stroke-dasharray="3 2.5"/><path d="M752.0 747.1 L754.4 776.5" fill="none" stroke="#8d9094" stroke-width="1" stroke-dasharray="3 2.5"/><path d="M778.9 752.0 L776.5 778.9" fill="none" stroke="#8d9094" stroke-width="1" stroke-dasharray="3 2.5"/><path d="M815.7 752.0 L815.7 783.8" fill="none" stroke="#8d9094" stroke-width="1" stroke-dasharray="3 2.5"/><path d="M830.4 700.5 L827.9 747.1" fill="none" stroke="#8d9094" stroke-width="1" stroke-dasharray="3 2.5"/><path d="M845.1 673.5 C844.3 677.6 840.2 689.9 840.2 698.0 C840.2 706.2 842.2 715.2 845.1 722.5 C848.0 729.9 853.3 736.4 857.4 742.2 C861.4 747.9 867.6 754.4 869.6 756.9" fill="none" stroke="#8d9094" stroke-width="1" stroke-dasharray="3 2.5"/><path d="M737.3 705.4 C743.0 706.2 759.7 708.3 771.6 710.3 C783.4 712.3 798.1 715.6 808.3 717.6 C818.5 719.7 828.8 721.7 832.8 722.5" fill="none" stroke="#8d9094" stroke-width="1" stroke-dasharray="3 2.5"/><path d="M771.6 727.5 L769.1 747.1" fill="none" stroke="#8d9094" stroke-width="1" stroke-dasharray="3 2.5"/><path d="M649.0 717.6 C655.1 718.1 674.3 719.7 685.8 720.1 C697.2 720.5 712.3 720.1 717.6 720.1" fill="none" stroke="#8d9094" stroke-width="1" stroke-dasharray="3 2.5"/><path d="M600.0 732.4 C603.3 734.8 614.7 740.5 619.6 747.1 C624.5 753.6 627.8 767.5 629.4 771.6" fill="none" stroke="#8d9094" stroke-width="1" stroke-dasharray="3 2.5"/><path d="M614.7 786.3 C618.4 788.7 629.4 797.3 636.8 801.0 C644.1 804.7 655.1 807.1 658.8 808.3" fill="none" stroke="#8d9094" stroke-width="1" stroke-dasharray="3 2.5"/><path d="M531.0 677.6 C534.8 675.3 548.5 667.1 554.1 663.5 C559.7 659.8 562.7 657.0 564.4 655.7" fill="none" stroke="#8d9094" stroke-width="1" stroke-dasharray="3 2.5"/><path d="M507.8 640.3 C512.1 641.6 524.1 645.9 533.5 648.0 C543.0 650.2 559.3 652.3 564.4 653.2" fill="none" stroke="#8d9094" stroke-width="1" stroke-dasharray="3 2.5"/><path d="M579.9 707.2 C581.1 712.4 584.1 729.5 587.6 738.1 C591.0 746.7 595.7 752.2 600.4 758.7 C605.2 765.1 611.2 771.5 615.9 776.7 C620.6 781.8 624.5 785.7 628.8 789.6 C633.0 793.4 639.5 798.1 641.6 799.9" fill="none" stroke="#8d9094" stroke-width="1" stroke-dasharray="3 2.5"/><path d="M623.6 630.0 C626.6 633.4 634.3 645.0 641.6 650.6 C648.9 656.2 658.8 660.0 667.4 663.5 C675.9 666.9 682.4 670.3 693.1 671.2 C703.8 672.0 725.3 669.0 731.7 668.6" fill="none" stroke="#8d9094" stroke-width="1" stroke-dasharray="3 2.5"/><path d="M667.4 648.0 C672.9 648.2 687.9 651.0 700.8 649.3 C713.7 647.6 733.8 640.9 744.6 637.7 C755.3 634.5 761.7 631.3 765.1 630.0" fill="none" stroke="#8d9094" stroke-width="1" stroke-dasharray="3 2.5"/><path d="M621.0 681.5 C625.7 684.0 639.5 693.1 649.3 696.9 C659.2 700.8 668.6 702.9 680.2 704.6 C691.8 706.3 706.0 705.5 718.8 707.2 C731.7 708.9 738.9 712.4 757.4 714.9 C776.0 717.5 817.9 721.4 830.0 722.6" fill="none" stroke="#8d9094" stroke-width="1" stroke-dasharray="3 2.5"/><path d="M739.4 676.3 C741.6 679.8 747.1 692.2 752.3 696.9 C757.4 701.6 763.0 705.1 770.3 704.6 C777.6 704.2 786.1 695.2 796.0 694.3 C806.0 693.5 824.3 698.6 830.0 699.5" fill="none" stroke="#8d9094" stroke-width="1" stroke-dasharray="3 2.5"/><path d="M711.1 707.2 C713.7 711.5 721.0 726.5 726.5 732.9 C732.1 739.4 737.3 743.2 744.6 745.8 C751.9 748.4 761.7 749.2 770.3 748.4 C778.9 747.5 786.1 742.4 796.0 740.7 C806.0 738.9 824.3 738.5 830.0 738.1" fill="none" stroke="#8d9094" stroke-width="1" stroke-dasharray="3 2.5"/><path d="M726.5 753.5 C730.8 752.7 743.3 748.4 752.3 748.4 C761.3 748.4 772.4 752.7 780.6 753.5 C788.7 754.4 792.9 754.4 801.2 753.5 C809.4 752.7 825.2 749.2 830.0 748.4" fill="none" stroke="#8d9094" stroke-width="1" stroke-dasharray="3 2.5"/><path d="M752.3 751.0 L754.9 784.4" fill="none" stroke="#8d9094" stroke-width="1" stroke-dasharray="3 2.5"/><path d="M778.0 751.0 L778.0 781.8" fill="none" stroke="#8d9094" stroke-width="1" stroke-dasharray="3 2.5"/><path d="M816.6 753.5 L819.2 774.1" fill="none" stroke="#8d9094" stroke-width="1" stroke-dasharray="3 2.5"/><path d="M765.1 727.8 L767.7 745.8" fill="none" stroke="#8d9094" stroke-width="1" stroke-dasharray="3 2.5"/><path d="M790.9 714.9 L790.9 745.8" fill="none" stroke="#8d9094" stroke-width="1" stroke-dasharray="3 2.5"/><path d="M718.8 792.1 C725.3 793.0 744.6 796.0 757.4 797.3 C770.3 798.6 785.3 797.7 796.0 799.9 C806.8 802.0 817.5 808.4 821.8 810.1" fill="none" stroke="#8d9094" stroke-width="1" stroke-dasharray="3 2.5"/><path d="M770.3 810.1 C774.6 812.7 787.5 826.4 796.0 825.6 C804.6 824.7 817.5 808.4 821.8 805.0" fill="none" stroke="#8d9094" stroke-width="1" stroke-dasharray="3 2.5"/><path d="M785.7 841.0 C788.3 837.6 796.9 825.6 801.2 820.4 C805.5 815.3 809.8 811.9 811.5 810.1" fill="none" stroke="#8d9094" stroke-width="1" stroke-dasharray="3 2.5"/><path d="M726.5 789.6 C729.5 792.1 739.4 799.9 744.6 805.0 C749.7 810.1 755.3 817.9 757.4 820.4" fill="none" stroke="#8d9094" stroke-width="1" stroke-dasharray="3 2.5"/><path d="M641.6 714.9 C645.9 717.9 656.6 729.1 667.4 732.9 C678.1 736.8 699.5 737.2 706.0 738.1" fill="none" stroke="#8d9094" stroke-width="1" stroke-dasharray="3 2.5"/><path d="M718.8 725.2 C720.1 722.2 724.0 713.2 726.5 707.2 C729.1 701.2 733.0 692.2 734.3 689.2" fill="none" stroke="#8d9094" stroke-width="1" stroke-dasharray="3 2.5"/><path d="M574.7 630.0 C578.1 635.1 588.4 652.3 595.3 660.9 C602.2 669.5 608.2 676.3 615.9 681.5 C623.6 686.6 637.3 690.0 641.6 691.8" fill="none" stroke="#8d9094" stroke-width="1" stroke-dasharray="3 2.5"/><path d="M585.0 714.9 C588.4 718.8 599.2 731.7 605.6 738.1 C612.0 744.5 620.6 751.0 623.6 753.5" fill="none" stroke="#8d9094" stroke-width="1" stroke-dasharray="3 2.5"/><path d="M662.2 774.1 C664.8 776.7 672.5 787.8 677.6 789.6 C682.8 791.3 690.5 785.3 693.1 784.4" fill="none" stroke="#8d9094" stroke-width="1" stroke-dasharray="3 2.5"/><path d="M631.3 805.0 L649.3 815.3" fill="none" stroke="#8d9094" stroke-width="1" stroke-dasharray="3 2.5"/><path d="M667.4 807.6 L682.8 820.4" fill="none" stroke="#8d9094" stroke-width="1" stroke-dasharray="3 2.5"/><path d="M695.7 810.1 C698.2 812.7 707.2 825.6 711.1 825.6 C715.0 825.6 717.5 812.7 718.8 810.1" fill="none" stroke="#8d9094" stroke-width="1" stroke-dasharray="3 2.5"/><path d="M672.5 835.9 L685.4 851.3" fill="none" stroke="#8d9094" stroke-width="1" stroke-dasharray="3 2.5"/><path d="M690.5 841.0 L706.0 856.5" fill="none" stroke="#8d9094" stroke-width="1" stroke-dasharray="3 2.5"/><path d="M721.4 820.4 L744.6 843.6" fill="none" stroke="#8d9094" stroke-width="1" stroke-dasharray="3 2.5"/><path d="M729.1 810.1 L749.7 810.1" fill="none" stroke="#8d9094" stroke-width="1" stroke-dasharray="3 2.5"/><path d="M987.3 630.0 C983.4 635.1 972.3 650.2 964.1 660.9 C956.0 671.6 946.1 684.0 938.4 694.3 C930.7 704.6 925.5 713.6 917.8 722.6 C910.1 731.7 901.9 739.8 892.1 748.4 C882.2 757.0 870.6 766.4 858.6 774.1 C846.6 781.8 826.4 791.3 820.0 794.7" fill="none" stroke="#a4a7aa" stroke-width="1"/><path d="M984.7 645.4 C981.3 650.6 971.4 666.5 964.1 676.3 C956.8 686.2 947.8 696.1 941.0 704.6 C934.1 713.2 930.2 719.6 922.9 727.8 C915.6 735.9 906.6 745.4 897.2 753.5 C887.8 761.7 879.2 769.0 866.3 776.7 C853.5 784.4 827.7 796.0 820.0 799.9" fill="none" stroke="#a4a7aa" stroke-width="1"/><path d="M979.6 637.7 C975.3 642.9 961.5 658.7 953.8 668.6 C946.1 678.5 941.0 687.0 933.2 696.9 C925.5 706.8 916.1 718.8 907.5 727.8 C898.9 736.8 886.1 747.1 881.8 751.0" fill="none" stroke="#8d9094" stroke-width="1" stroke-dasharray="3 2.5"/><path d="M820.0 702.1 C823.4 701.2 835.0 700.3 840.6 696.9 C846.2 693.5 851.7 687.5 853.5 681.5 C855.2 675.5 856.5 665.6 850.9 660.9 C845.3 656.2 825.1 654.4 820.0 653.2" fill="none" stroke="#8d9094" stroke-width="1" stroke-dasharray="3 2.5"/><path d="M843.2 707.2 C843.6 710.6 841.9 721.8 845.7 727.8 C849.6 733.8 859.9 739.8 866.3 743.2 C872.8 746.7 881.3 747.5 884.3 748.4" fill="none" stroke="#8d9094" stroke-width="1" stroke-dasharray="3 2.5"/><path d="M820.0 753.5 C824.3 753.1 837.2 750.1 845.7 751.0 C854.3 751.8 864.6 757.8 871.5 758.7 C878.3 759.5 884.3 756.5 886.9 756.1" fill="none" stroke="#8d9094" stroke-width="1" stroke-dasharray="3 2.5"/><path d="M820.0 784.4 C824.3 784.0 837.2 783.6 845.7 781.8 C854.3 780.1 867.2 775.4 871.5 774.1" fill="none" stroke="#8d9094" stroke-width="1" stroke-dasharray="3 2.5"/><path d="M820.0 810.1 C824.3 807.6 837.2 799.4 845.7 794.7 C854.3 790.0 867.2 784.0 871.5 781.8" fill="none" stroke="#8d9094" stroke-width="1" stroke-dasharray="3 2.5"/><path d="M1015.6 714.9 C1013.0 718.8 1007.0 729.1 1000.1 738.1 C993.3 747.1 983.0 759.5 974.4 769.0 C965.8 778.4 955.5 791.3 948.7 794.7 C941.8 798.1 935.8 790.4 933.2 789.6" fill="none" stroke="#8d9094" stroke-width="1" stroke-dasharray="3 2.5"/><path d="M1051.6 645.4 C1052.5 648.9 1052.5 661.7 1056.8 666.0 C1061.1 670.3 1071.8 667.3 1077.4 671.2 C1082.9 675.0 1085.9 683.6 1090.2 689.2 C1094.5 694.8 1100.9 702.1 1103.1 704.6" fill="none" stroke="#8d9094" stroke-width="1" stroke-dasharray="3 2.5"/><path d="M1116.0 709.8 C1120.2 711.1 1133.1 717.1 1141.7 717.5 C1150.3 717.9 1158.8 709.8 1167.4 712.4 C1176.0 714.9 1185.4 726.9 1193.2 732.9 C1200.9 738.9 1205.9 748.4 1213.8 748.4 C1221.6 748.4 1235.6 735.5 1240.0 732.9" fill="none" stroke="#8d9094" stroke-width="1" stroke-dasharray="3 2.5"/><path d="M1213.8 748.4 C1215.0 752.7 1220.6 764.7 1221.5 774.1 C1222.3 783.6 1219.3 799.9 1218.9 805.0" fill="none" stroke="#8d9094" stroke-width="1" stroke-dasharray="3 2.5"/><path d="M1206.0 753.5 C1209.9 758.7 1225.8 775.4 1229.2 784.4 C1232.6 793.4 1227.0 803.7 1226.6 807.6" fill="none" stroke="#8d9094" stroke-width="1" stroke-dasharray="3 2.5"/><path d="M1031.0 699.5 C1034.5 695.6 1046.0 683.2 1051.6 676.3 C1057.2 669.5 1062.3 661.3 1064.5 658.3" fill="none" stroke="#8d9094" stroke-width="1" stroke-dasharray="3 2.5"/><path d="M858.6 691.8 C860.7 694.3 867.2 702.1 871.5 707.2 C875.8 712.4 882.6 718.4 884.3 722.6 C886.1 726.9 882.2 731.2 881.8 732.9" fill="none" stroke="#8d9094" stroke-width="1" stroke-dasharray="3 2.5"/><path d="M1154.6 676.3 L1152.0 702.1" fill="none" stroke="#8d9094" stroke-width="1" stroke-dasharray="3 2.5"/><path d="M989.9 645.4 C992.4 648.9 999.3 660.0 1005.3 666.0 C1011.3 672.0 1022.5 678.9 1025.9 681.5" fill="none" stroke="#8d9094" stroke-width="1" stroke-dasharray="3 2.5"/><path d="M1000.1 681.5 L987.3 707.2" fill="none" stroke="#8d9094" stroke-width="1" stroke-dasharray="3 2.5"/><path d="M1212.0 748.4 C1217.6 744.1 1230.4 727.8 1245.5 722.6 C1260.5 717.5 1292.6 724.4 1302.1 717.5 C1311.5 710.6 1297.1 687.5 1302.1 681.5 C1307.0 675.5 1326.7 681.5 1331.7 681.5" fill="none" stroke="#8d9094" stroke-width="1" stroke-dasharray="3 2.5"/><path d="M1263.5 725.2 L1248.0 789.6" fill="none" stroke="#8d9094" stroke-width="1" stroke-dasharray="3 2.5"/><path d="M1294.4 720.1 L1276.3 797.3" fill="none" stroke="#8d9094" stroke-width="1" stroke-dasharray="3 2.5"/><path d="M1212.0 748.4 C1215.0 751.8 1228.1 759.5 1230.0 769.0 C1231.9 778.4 1224.7 799.0 1223.6 805.0" fill="none" stroke="#8d9094" stroke-width="1" stroke-dasharray="3 2.5"/><path d="M1217.1 748.4 L1219.7 805.0" fill="none" stroke="#8d9094" stroke-width="1" stroke-dasharray="3 2.5"/><path d="M1331.7 681.5 C1333.2 678.5 1341.3 669.5 1340.7 663.5 C1340.0 657.5 1330.8 651.0 1327.8 645.4 C1324.8 639.9 1323.5 632.6 1322.7 630.0" fill="none" stroke="#8d9094" stroke-width="1" stroke-dasharray="3 2.5"/><path d="M1253.2 640.3 L1289.2 630.0" fill="none" stroke="#8d9094" stroke-width="1" stroke-dasharray="3 2.5"/><path d="M1358.7 630.0 L1363.8 648.0" fill="none" stroke="#8d9094" stroke-width="1" stroke-dasharray="3 2.5"/><path d="M1392.1 632.6 L1397.3 637.7" fill="none" stroke="#8d9094" stroke-width="1" stroke-dasharray="3 2.5"/><path d="M1100.0 463.5 C1103.3 462.9 1113.1 461.9 1119.6 459.6 C1126.1 457.3 1133.3 452.1 1139.2 449.8 C1145.1 447.5 1150.7 444.9 1154.9 445.9 C1159.2 446.9 1162.7 450.1 1164.7 455.7 C1166.7 461.2 1165.7 472.7 1166.7 479.2 C1167.6 485.8 1169.3 488.4 1170.6 494.9 C1171.9 501.4 1174.5 512.9 1174.5 518.4 C1174.5 524.0 1175.5 524.3 1170.6 528.2 C1165.7 532.2 1153.6 537.7 1145.1 542.0 C1136.6 546.2 1127.1 550.5 1119.6 553.7 C1112.1 557.0 1103.3 560.3 1100.0 561.6" fill="none" stroke="#8d9094" stroke-width="1" stroke-dasharray="3 2.5"/><path d="M1198.0 447.8 C1199.7 449.8 1204.6 451.8 1207.8 459.6 C1211.1 467.5 1215.4 485.1 1217.6 494.9 C1219.9 504.7 1220.3 510.6 1221.6 518.4 C1222.9 526.3 1225.2 532.2 1225.5 542.0 C1225.8 551.8 1223.5 570.7 1223.5 577.3 C1223.5 583.8 1223.2 577.9 1225.5 581.2 C1227.8 584.4 1234.6 591.0 1237.3 596.9 C1239.9 602.7 1240.5 613.2 1241.2 616.5" fill="none" stroke="#8d9094" stroke-width="1" stroke-dasharray="3 2.5"/><path d="M1100.0 579.2 C1108.2 578.9 1134.3 576.9 1149.0 577.3 C1163.7 577.6 1175.8 580.5 1188.2 581.2 C1200.7 581.8 1217.6 581.2 1223.5 581.2" fill="none" stroke="#8d9094" stroke-width="1" stroke-dasharray="3 2.5"/><path d="M1115.7 557.6 C1116.3 560.9 1118.6 571.4 1119.6 577.3 C1120.6 583.1 1120.3 589.7 1121.6 592.9 C1122.9 596.2 1123.5 599.5 1127.5 596.9 C1131.4 594.2 1142.2 580.5 1145.1 577.3" fill="none" stroke="#8d9094" stroke-width="1" stroke-dasharray="3 2.5"/><path d="M1135.3 549.8 C1135.9 552.7 1137.3 562.9 1139.2 567.5 C1141.2 572.0 1144.1 575.6 1147.1 577.3 C1150.0 578.9 1155.2 577.3 1156.9 577.3" fill="none" stroke="#8d9094" stroke-width="1" stroke-dasharray="3 2.5"/><path d="M1229.4 542.0 C1234.0 541.3 1247.4 538.4 1256.9 538.0 C1266.3 537.7 1276.5 540.7 1286.3 540.0 C1296.1 539.3 1309.5 533.8 1315.7 534.1 C1321.9 534.4 1321.6 538.0 1323.5 542.0 C1325.5 545.9 1326.5 552.4 1327.5 557.6 C1328.4 562.9 1329.1 570.7 1329.4 573.3" fill="none" stroke="#8d9094" stroke-width="1" stroke-dasharray="3 2.5"/><path d="M1237.3 459.6 C1241.2 460.6 1254.2 462.5 1260.8 465.5 C1267.3 468.4 1272.9 474.0 1276.5 477.3 C1280.1 480.5 1281.0 479.9 1282.4 485.1 C1283.7 490.3 1283.7 499.8 1284.3 508.6 C1285.0 517.5 1285.9 533.1 1286.3 538.0" fill="none" stroke="#8d9094" stroke-width="1" stroke-dasharray="3 2.5"/><path d="M1282.4 485.1 C1284.0 485.1 1288.2 489.7 1292.2 485.1 C1296.1 480.5 1301.0 463.2 1305.9 457.6 C1310.8 452.1 1317.6 450.8 1321.6 451.8 C1325.5 452.7 1325.5 457.3 1329.4 463.5 C1333.3 469.7 1340.8 480.5 1345.1 489.0 C1349.3 497.5 1351.6 508.6 1354.9 514.5 C1358.2 520.4 1360.8 517.8 1364.7 524.3 C1368.6 530.8 1375.5 541.6 1378.4 553.7 C1381.4 565.8 1380.4 586.4 1382.4 596.9 C1384.3 607.3 1388.9 613.2 1390.2 616.5" fill="none" stroke="#8d9094" stroke-width="1" stroke-dasharray="3 2.5"/><path d="M1296.1 487.1 C1296.4 488.7 1296.1 491.6 1298.0 496.9 C1300.0 502.1 1305.6 512.9 1307.8 518.4 C1310.1 524.0 1311.1 528.2 1311.8 530.2" fill="none" stroke="#8d9094" stroke-width="1" stroke-dasharray="3 2.5"/><path d="M1333.3 520.4 C1336.6 519.7 1348.4 516.1 1352.9 516.5 C1357.5 516.8 1358.5 519.7 1360.8 522.4 C1363.1 525.0 1365.7 530.5 1366.7 532.2" fill="none" stroke="#8d9094" stroke-width="1" stroke-dasharray="3 2.5"/><path d="M1333.3 551.8 C1335.6 550.8 1343.5 545.9 1347.1 545.9 C1350.7 545.9 1350.0 550.8 1354.9 551.8 C1359.8 552.7 1372.5 545.6 1376.5 551.8 C1380.4 558.0 1378.1 582.8 1378.4 589.0" fill="none" stroke="#8d9094" stroke-width="1" stroke-dasharray="3 2.5"/><path d="M1311.8 440.0 C1313.1 443.3 1318.0 454.1 1319.6 459.6 C1321.2 465.2 1321.2 471.0 1321.6 473.3" fill="none" stroke="#8d9094" stroke-width="1" stroke-dasharray="3 2.5"/><path d="M1315.7 573.3 C1317.3 571.7 1323.0 566.8 1325.5 563.5 C1327.9 560.3 1329.6 555.4 1330.4 553.7" fill="none" stroke="#8d9094" stroke-width="1" stroke-dasharray="3 2.5"/><path d="M1198.0 596.9 C1199.7 596.5 1205.2 594.9 1207.8 594.9 C1210.5 594.9 1212.7 592.6 1213.7 596.9 C1214.7 601.1 1216.3 616.5 1213.7 620.4 C1211.1 624.3 1200.7 624.3 1198.0 620.4 C1195.4 616.5 1198.0 600.8 1198.0 596.9" fill="none" stroke="#8d9094" stroke-width="1" stroke-dasharray="3 2.5"/><path d="M1333.3 577.3 C1334.6 580.5 1338.2 590.3 1341.2 596.9 C1344.1 603.4 1349.3 613.2 1351.0 616.5" fill="none" stroke="#8d9094" stroke-width="1" stroke-dasharray="3 2.5"/><path d="M1245.1 453.7 L1252.9 459.6" fill="none" stroke="#8d9094" stroke-width="1" stroke-dasharray="3 2.5"/><path d="M1184.3 526.3 C1188.6 525.6 1202.9 523.0 1209.8 522.4 C1216.7 521.7 1222.9 522.4 1225.5 522.4" fill="none" stroke="#8d9094" stroke-width="1" stroke-dasharray="3 2.5"/><path d="M1243.1 614.5 C1245.4 613.9 1251.3 612.2 1256.9 610.6 C1262.4 609.0 1268.6 606.7 1276.5 604.7 C1284.3 602.7 1299.3 599.8 1303.9 598.8" fill="none" stroke="#a4a7aa" stroke-width="1"/><path d="M1150.0 290.3L1160.3 285.1M1155.1 294.1L1165.2 288.3M1160.3 297.8L1170.1 291.4M1165.4 301.6L1175.0 294.5M1170.6 305.4L1179.9 297.6M1175.7 309.2L1184.8 300.7M1179.9 313.9L1189.7 303.8M1184.2 318.7L1194.6 306.9M1188.4 323.5L1199.4 310.2M1192.6 328.3L1204.0 313.7M1196.8 333.1L1208.6 317.2M1201.0 337.8L1213.2 320.7M1205.4 342.5L1217.8 324.2M1209.8 347.2L1222.5 327.7M1214.1 351.8L1227.1 331.2M1218.5 356.5L1231.7 334.7M1222.8 361.1L1236.3 338.3M1227.2 365.8L1240.9 341.8" fill="none" stroke="#8d9094" stroke-width="0.9" stroke-dasharray="2.5 1.5"/><path d="M1150.0 290.3 C1154.3 293.4 1167.2 301.2 1175.7 309.2 C1184.3 317.2 1192.9 328.9 1201.5 338.3 C1210.0 347.8 1222.9 361.2 1227.2 365.8" fill="none" stroke="#8d9094" stroke-width="1" stroke-dasharray="3 3"/><path d="M487.2 410.3 C490.0 410.3 497.5 410.9 504.3 410.3 C511.2 409.7 524.3 407.4 528.3 406.9" fill="none" stroke="#8d9094" stroke-width="1" stroke-dasharray="3 2.5"/><path d="M512.9 417.2 C512.6 420.0 511.7 429.2 511.2 434.3 C510.6 439.5 511.2 442.3 509.5 448.0 C507.7 453.8 503.5 464.6 500.9 468.6 C498.3 472.6 495.2 471.5 494.0 472.1" fill="none" stroke="#8d9094" stroke-width="1" stroke-dasharray="3 2.5"/><path d="M538.6 454.9 C539.8 455.2 543.2 455.8 545.5 456.6 C547.8 457.5 550.1 459.5 552.4 460.0 C554.6 460.6 556.9 461.5 559.2 460.0 C561.5 458.6 563.2 454.6 566.1 451.5 C568.9 448.3 572.9 444.6 576.4 441.2 C579.8 437.7 583.2 433.7 586.7 430.9 C590.1 428.0 591.8 425.2 597.0 424.0 C602.1 422.9 610.1 423.4 617.5 424.0 C625.0 424.6 635.3 426.0 641.6 427.5 C647.9 428.9 650.7 430.3 655.3 432.6 C659.9 434.9 666.7 439.7 669.0 441.2" fill="none" stroke="#8d9094" stroke-width="1" stroke-dasharray="3 2.5"/><path d="M547.2 456.6 C546.3 458.6 544.1 464.3 542.1 468.6 C540.1 472.9 536.9 478.6 535.2 482.4 C533.5 486.1 532.3 489.5 531.8 490.9" fill="none" stroke="#8d9094" stroke-width="1" stroke-dasharray="3 2.5"/><path d="M531.8 492.6 C532.1 497.2 532.3 512.7 533.5 520.1 C534.6 527.5 536.9 533.0 538.6 537.3 C540.3 541.5 540.3 541.7 543.8 545.8 C547.2 550.0 556.6 559.3 559.2 562.0" fill="none" stroke="#8d9094" stroke-width="1" stroke-dasharray="3 2.5"/><path d="M579.8 468.6 C579.2 470.9 576.9 477.8 576.4 482.4 C575.8 486.9 575.8 490.4 576.4 496.1 C576.9 501.8 578.7 510.4 579.8 516.7 C580.9 523.0 582.7 531.0 583.2 533.8" fill="none" stroke="#8d9094" stroke-width="1" stroke-dasharray="3 2.5"/><path d="M572.9 499.5 C575.2 498.9 582.1 497.8 586.7 496.1 C591.2 494.4 595.8 490.9 600.4 489.2 C605.0 487.5 611.8 486.4 614.1 485.8" fill="none" stroke="#8d9094" stroke-width="1" stroke-dasharray="3 2.5"/><path d="M569.5 478.9 C571.2 477.5 575.8 474.1 579.8 470.3 C583.8 466.6 590.1 459.8 593.5 456.6 C597.0 453.5 599.2 452.3 600.4 451.5" fill="none" stroke="#8d9094" stroke-width="1" stroke-dasharray="3 2.5"/><path d="M617.5 454.9 C618.7 455.2 620.4 455.5 624.4 456.6 C628.4 457.8 635.8 459.8 641.6 461.8 C647.3 463.8 653.6 466.3 658.7 468.6 C663.9 470.9 670.2 474.3 672.5 475.5" fill="none" stroke="#8d9094" stroke-width="1" stroke-dasharray="3 2.5"/><path d="M693.0 430.9 C695.3 433.2 702.5 440.6 706.8 444.6 C711.1 448.6 716.8 453.2 718.8 454.9" fill="none" stroke="#8d9094" stroke-width="1" stroke-dasharray="3 2.5"/><path d="M624.4 434.3 L641.6 441.2" fill="none" stroke="#8d9094" stroke-width="1" stroke-dasharray="3 2.5"/><path d="M572.9 496.1 C574.1 498.4 576.9 505.8 579.8 509.8 C582.7 513.8 586.7 516.7 590.1 520.1 C593.5 523.5 596.7 527.0 600.4 530.4 C604.1 533.8 610.4 539.0 612.4 540.7" fill="none" stroke="#8d9094" stroke-width="1" stroke-dasharray="3 2.5"/><path d="M621.0 511.5 C622.7 513.5 627.8 519.5 631.3 523.5 C634.7 527.5 638.1 531.8 641.6 535.5 C645.0 539.3 650.1 544.1 651.9 545.8" fill="none" stroke="#8d9094" stroke-width="1" stroke-dasharray="3 2.5"/><path d="M669.0 489.2 C669.3 491.5 670.7 497.8 670.7 502.9 C670.7 508.1 668.2 516.7 669.0 520.1 C669.9 523.5 674.7 523.0 675.9 523.5" fill="none" stroke="#8d9094" stroke-width="1" stroke-dasharray="3 2.5"/><path d="M684.5 502.9 C687.3 504.1 695.9 508.1 701.6 509.8 C707.3 511.5 715.9 512.7 718.8 513.2" fill="none" stroke="#8d9094" stroke-width="1" stroke-dasharray="3 2.5"/><path d="M693.0 496.1 C695.9 497.2 704.5 498.9 710.2 502.9 C715.9 506.9 721.6 515.0 727.4 520.1 C733.1 525.2 741.7 531.5 744.5 533.8" fill="none" stroke="#8d9094" stroke-width="1" stroke-dasharray="3 2.5"/><path d="M615.8 485.8 C617.3 487.5 624.1 492.1 624.4 496.1 C624.7 500.1 618.7 507.5 617.5 509.8" fill="none" stroke="#8d9094" stroke-width="1" stroke-dasharray="3 2.5"/><path d="M641.6 489.2 C644.4 488.6 654.2 487.2 658.7 485.8 C663.3 484.4 667.3 481.5 669.0 480.6" fill="none" stroke="#8d9094" stroke-width="1" stroke-dasharray="3 2.5"/><path d="M693.0 520.1 C694.5 521.8 698.2 527.5 701.6 530.4 C705.0 533.3 709.3 534.7 713.6 537.3 C717.9 539.8 725.1 544.4 727.4 545.8" fill="none" stroke="#8d9094" stroke-width="1" stroke-dasharray="3 2.5"/><path d="M480.3 516.7 L470.0 520.1" fill="none" stroke="#8d9094" stroke-width="1" stroke-dasharray="3 2.5"/><path d="M590.1 468.6 C591.8 470.1 597.5 473.8 600.4 477.2 C603.3 480.6 606.1 487.2 607.3 489.2" fill="none" stroke="#8d9094" stroke-width="1" stroke-dasharray="3 2.5"/><path d="M675.9 448.0 C678.7 449.8 687.3 454.3 693.0 458.3 C698.8 462.3 704.5 467.5 710.2 472.1 C715.9 476.6 720.7 481.2 727.4 485.8 C734.0 490.4 746.2 497.2 750.0 499.5" fill="none" stroke="#a4a7aa" stroke-width="1"/><path d="M980.0 572.6 C977.4 568.6 970.3 556.6 964.2 548.6 C958.2 540.6 950.5 529.5 943.6 524.6 C936.8 519.7 929.9 521.2 923.0 519.5 C916.2 517.7 908.5 515.5 902.5 514.3 C896.4 513.2 891.0 511.5 887.0 512.6 C883.0 513.7 881.0 517.2 878.4 521.2 C875.9 525.2 874.7 530.9 871.6 536.6 C868.4 542.3 863.3 551.2 859.6 555.5 C855.8 559.8 853.6 560.6 849.3 562.4 C845.0 564.1 836.4 565.2 833.8 565.8" fill="none" stroke="#a4a7aa" stroke-width="1"/><path d="M935.0 480.0 C935.3 484.3 935.3 498.6 936.8 505.7 C938.2 512.9 942.5 520.0 943.6 522.9" fill="none" stroke="#a4a7aa" stroke-width="1"/><path d="M725.7 480.0 C728.6 482.3 735.7 488.0 742.9 493.7 C750.0 499.4 761.5 508.0 768.6 514.3 C775.8 520.6 781.2 525.8 785.8 531.5 C790.4 537.2 794.4 545.8 796.1 548.6" fill="none" stroke="#a4a7aa" stroke-width="1"/><path d="M980.0 586.4 C976.2 582.4 964.6 570.9 957.4 562.4 C950.1 553.8 943.9 540.9 936.8 534.9 C929.6 528.9 921.9 528.3 914.5 526.3 C907.0 524.3 897.6 522.0 892.2 522.9 C886.7 523.8 885.6 526.6 881.9 531.5 C878.1 536.3 874.4 546.3 869.9 552.1 C865.3 557.8 860.4 562.4 854.4 565.8 C848.4 569.2 837.3 571.5 833.8 572.6" fill="none" stroke="#8d9094" stroke-width="1" stroke-dasharray="3 2.5"/><path d="M947.1 480.0 C947.1 484.3 945.9 498.3 947.1 505.7 C948.2 513.2 952.8 521.5 953.9 524.6" fill="none" stroke="#8d9094" stroke-width="1" stroke-dasharray="3 2.5"/><path d="M916.2 480.0 C916.7 482.9 918.8 491.4 919.6 497.2 C920.5 502.9 921.0 511.5 921.3 514.3" fill="none" stroke="#8d9094" stroke-width="1" stroke-dasharray="3 2.5"/><path d="M881.9 480.0 C882.7 482.9 884.4 492.6 887.0 497.2 C889.6 501.7 892.7 504.6 897.3 507.5 C901.9 510.3 911.6 513.2 914.5 514.3" fill="none" stroke="#8d9094" stroke-width="1" stroke-dasharray="3 2.5"/><path d="M700.0 500.6 C702.9 502.9 711.4 509.2 717.2 514.3 C722.9 519.5 729.5 525.2 734.3 531.5 C739.2 537.8 744.3 548.6 746.3 552.1" fill="none" stroke="#8d9094" stroke-width="1" stroke-dasharray="3 2.5"/><path d="M700.0 528.0 C702.3 529.5 709.4 533.2 713.7 536.6 C718.0 540.0 723.7 546.6 725.7 548.6" fill="none" stroke="#8d9094" stroke-width="1" stroke-dasharray="3 2.5"/><path d="M797.8 493.7 C796.4 497.2 791.8 509.2 789.2 514.3 C786.6 519.5 783.5 522.9 782.4 524.6" fill="none" stroke="#8d9094" stroke-width="1" stroke-dasharray="3 2.5"/><path d="M802.9 493.7 C805.8 496.3 815.5 505.4 820.1 509.2 C824.7 512.9 828.7 514.9 830.4 516.0" fill="none" stroke="#8d9094" stroke-width="1" stroke-dasharray="3 2.5"/><path d="M802.9 536.6 C805.8 538.6 815.2 545.8 820.1 548.6 C825.0 551.5 830.1 552.9 832.1 553.8" fill="none" stroke="#8d9094" stroke-width="1" stroke-dasharray="3 2.5"/><path d="M833.8 517.7 C837.3 520.0 849.3 528.3 854.4 531.5 C859.6 534.6 863.0 535.8 864.7 536.6" fill="none" stroke="#8d9094" stroke-width="1" stroke-dasharray="3 2.5"/><path d="M785.8 560.6 L837.3 562.4" fill="none" stroke="#8d9094" stroke-width="1" stroke-dasharray="3 2.5"/><path d="M794.4 562.4 C793.8 565.8 792.4 575.8 790.9 582.9 C789.5 590.1 787.2 599.5 785.8 605.2 C784.4 611.0 782.9 615.3 782.4 617.3" fill="none" stroke="#8d9094" stroke-width="1" stroke-dasharray="3 2.5"/><path d="M804.7 576.1 C803.2 579.5 798.7 590.9 796.1 596.7 C793.5 602.4 790.4 608.1 789.2 610.4" fill="none" stroke="#8d9094" stroke-width="1" stroke-dasharray="3 2.5"/><path d="M830.4 576.1 C828.7 578.9 823.5 587.5 820.1 593.2 C816.7 599.0 811.5 607.5 809.8 610.4" fill="none" stroke="#8d9094" stroke-width="1" stroke-dasharray="3 2.5"/><path d="M739.5 555.5 C739.5 560.1 741.7 575.5 739.5 582.9 C737.2 590.4 730.6 595.5 725.7 600.1 C720.9 604.7 712.9 608.7 710.3 610.4" fill="none" stroke="#8d9094" stroke-width="1" stroke-dasharray="3 2.5"/><path d="M746.3 553.8 C744.3 555.8 739.2 560.9 734.3 565.8 C729.5 570.6 722.9 577.2 717.2 582.9 C711.4 588.7 702.9 597.2 700.0 600.1" fill="none" stroke="#8d9094" stroke-width="1" stroke-dasharray="3 2.5"/><path d="M888.7 534.9 C890.2 537.8 895.0 547.5 897.3 552.1 C899.6 556.6 901.9 557.2 902.5 562.4 C903.0 567.5 901.0 579.5 900.7 582.9" fill="none" stroke="#8d9094" stroke-width="1" stroke-dasharray="3 2.5"/><path d="M914.5 536.6 C913.9 539.2 912.5 546.1 911.0 552.1 C909.6 558.1 907.6 567.5 905.9 572.6 C904.2 577.8 901.6 581.2 900.7 582.9" fill="none" stroke="#8d9094" stroke-width="1" stroke-dasharray="3 2.5"/><path d="M863.0 562.4 C865.8 563.5 874.4 566.9 880.1 569.2 C885.9 571.5 893.9 573.8 897.3 576.1 C900.7 578.4 900.2 581.8 900.7 582.9" fill="none" stroke="#8d9094" stroke-width="1" stroke-dasharray="3 2.5"/><path d="M940.2 548.6 C943.1 551.5 953.9 560.1 957.4 565.8 C960.8 571.5 963.6 577.2 960.8 582.9 C957.9 588.7 946.5 593.8 940.2 600.1 C933.9 606.4 925.9 617.3 923.0 620.7" fill="none" stroke="#8d9094" stroke-width="1" stroke-dasharray="3 2.5"/><path d="M833.8 624.1 C835.8 621.8 841.0 611.5 845.8 610.4 C850.7 609.2 858.7 615.3 863.0 617.3 C867.3 619.3 870.1 621.5 871.6 622.4" fill="none" stroke="#8d9094" stroke-width="1" stroke-dasharray="3 2.5"/><path d="M880.1 612.1 C883.0 613.0 891.6 614.7 897.3 617.3 C903.0 619.8 911.6 625.8 914.5 627.5" fill="none" stroke="#8d9094" stroke-width="1" stroke-dasharray="3 2.5"/><path d="M734.3 642.0 C737.2 639.6 745.8 630.8 751.5 627.5 C757.2 624.3 765.8 623.3 768.6 622.4" fill="none" stroke="#8d9094" stroke-width="1" stroke-dasharray="3 2.5"/><path d="M799.5 613.8 C802.9 613.3 815.0 609.8 820.1 610.4 C825.2 611.0 828.7 616.1 830.4 617.3" fill="none" stroke="#8d9094" stroke-width="1" stroke-dasharray="3 2.5"/><path d="M513.4 416.7 C511.2 418.7 504.1 422.7 500.2 428.7 C496.4 434.7 492.0 445.1 490.3 452.7 C488.5 460.2 489.3 466.8 489.6 473.8 C489.9 480.9 489.8 486.0 491.9 494.9 C494.0 503.7 497.9 516.0 502.2 526.8 C506.4 537.5 510.5 547.6 517.3 559.5 C524.2 571.5 536.5 586.6 543.3 598.5 C550.2 610.5 552.2 622.1 558.2 631.3 C564.2 640.4 572.4 642.8 579.2 653.3 C586.0 663.8 592.5 684.2 599.2 694.2 C605.8 704.3 609.4 706.1 619.1 713.5 C628.7 721.0 644.4 730.8 657.2 738.8 C669.9 746.8 681.7 754.2 695.4 761.6 C709.1 769.1 720.4 778.6 739.2 783.5 C758.1 788.5 790.7 791.9 808.3 791.2 C826.0 790.4 832.8 784.6 845.1 778.9 C857.4 773.2 869.6 765.4 881.9 756.9 C894.1 748.3 906.4 738.1 918.6 727.5 C930.9 716.8 943.1 706.2 955.4 693.1 C967.6 680.1 986.0 656.4 992.2 649.0" fill="none" stroke="#a4a7aa" stroke-width="1"/><path d="M503.8 429.3 C502.2 433.3 495.5 446.1 493.7 453.5 C491.9 460.9 492.8 466.9 493.1 473.7 C493.4 480.5 493.2 485.4 495.3 494.0 C497.3 502.7 501.2 514.9 505.4 525.5 C509.6 536.1 513.5 545.9 520.4 557.8 C527.2 569.7 539.6 584.9 546.4 596.8 C553.2 608.7 555.2 620.2 561.1 629.3 C567.1 638.4 575.3 640.9 582.1 651.4 C589.0 661.9 595.6 682.4 602.1 692.3 C608.6 702.2 611.7 703.5 621.2 710.8 C630.7 718.0 646.3 727.8 659.0 735.8 C671.7 743.8 691.0 754.9 697.4 758.7" fill="none" stroke="#a4a7aa" stroke-width="1"/><path d="M490.5 423.7 C488.6 428.1 481.5 441.7 479.6 450.1 C477.6 458.5 478.3 466.3 478.6 474.2 C478.9 482.1 478.9 487.9 481.2 497.4 C483.4 506.8 487.5 519.5 491.9 530.8 C496.4 542.1 500.8 552.8 507.8 565.0 C514.8 577.2 526.9 591.9 533.8 604.0 C540.7 616.0 542.9 628.1 549.0 637.3 C555.0 646.5 563.1 648.8 570.0 659.3 C576.8 669.8 583.0 689.9 590.0 700.3 C597.0 710.7 608.2 718.2 611.8 721.8" fill="none" stroke="#8d9094" stroke-width="1" stroke-dasharray="3 2.5"/><path d="M1056 180.5h2v3h-2M1090.5 180v4M1092.5 180v4M973.5 197v4M975.5 197v4M1040.5 197v4M1042.5 197v4M1107 197.5h2v3h-2M922 214.5h2v3h-2M1056.5 214v4M1058.5 214v4M1090.5 214v4M1092.5 214v4M671 230.5h2v3h-2M939 230.5h2v3h-2M973.5 230v4M975.5 230v4M1041.5 230v4M1040 233.5h3M1073.5 230v4M1075.5 230v4M1107 230.5h2v3h-2M688.5 247v4M690.5 247v4M722.5 247v4M724.5 247v4M755.5 247v4M757.5 247v4M789.5 247v4M788 250.5h3M856 247.5h2v3h-2M889 247.5h2v3h-2M923.5 247v4M922 250.5h3M956.5 247v4M958.5 247v4M990.5 247v4M992.5 247v4M1023 247.5h2v3h-2M1090.5 247v4M1092.5 247v4M604.5 264v4M606.5 264v4M671.5 264v4M673.5 264v4M738.5 264v4M740.5 264v4M772.5 264v4M774.5 264v4M805 264.5h2v3h-2M840.5 264v4M839 267.5h3M872.5 264v4M874.5 264v4M906.5 264v4M908.5 264v4M1006.5 264v4M1008.5 264v4M1073.5 264v4M1075.5 264v4M1107.5 264v4M1109.5 264v4M588 280l1.5 2l1.5 -2M589.5 282v2M621 280.5h2v3h-2M689.5 280v4M688 283.5h3M723.5 280v4M722 283.5h3M755.5 280v4M757.5 280v4M788.5 280v4M790.5 280v4M956.5 280v4M958.5 280v4M990.5 280v4M992.5 280v4M1125.5 280v4M1124 283.5h3M1157.5 280v4M1159.5 280v4M571.5 297v4M573.5 297v4M671 297.5h2v3h-2M706.5 297v4M705 300.5h3M738.5 297v4M740.5 297v4M772.5 297v4M774.5 297v4M805 297.5h2v3h-2M873.5 297v4M872 300.5h3M907.5 297v4M906 300.5h3M940.5 297v4M939 300.5h3M973.5 297v4M975.5 297v4M1073.5 297v4M1075.5 297v4M1107 297l1.5 2l1.5 -2M1108.5 299v2M1140 297l1.5 2l1.5 -2M1141.5 299v2M1174 297l1.5 2l1.5 -2M1175.5 299v2M520 314.5h2v3h-2M555.5 314v4M554 317.5h3M588 314.5h2v3h-2M621.5 314v4M623.5 314v4M654 314l1.5 2l1.5 -2M655.5 316v2M689.5 314v4M688 317.5h3M722.5 314v4M724.5 314v4M755.5 314v4M757.5 314v4M788 314l1.5 2l1.5 -2M789.5 316v2M822.5 314v4M824.5 314v4M922 314l1.5 2l1.5 -2M923.5 316v2M956.5 314v4M958.5 314v4M990 314l1.5 2l1.5 -2M991.5 316v2M1023.5 314v4M1025.5 314v4M1090 314l1.5 2l1.5 -2M1091.5 316v2M1124 314.5h2v3h-2M1157.5 314v4M1159.5 314v4M470.5 331v4M472.5 331v4M504.5 331v4M506.5 331v4M537.5 331v4M539.5 331v4M571.5 331v4M573.5 331v4M604 331.5h2v3h-2M638.5 331v4M640.5 331v4M671 331.5h2v3h-2M772.5 331v4M774.5 331v4M805.5 331v4M807.5 331v4M839 331.5h2v3h-2M872.5 331v4M874.5 331v4M906 331.5h2v3h-2M939.5 331v4M941.5 331v4M1007.5 331v4M1006 334.5h3M1040 331.5h2v3h-2M1073 331l1.5 2l1.5 -2M1074.5 333v2M1107 331.5h2v3h-2M1140 331.5h2v3h-2M1174.5 331v4M1176.5 331v4M1207.5 331v4M1209.5 331v4M1241 331.5h2v3h-2M520 348.5h2v3h-2M588.5 348v4M590.5 348v4M654.5 348v4M656.5 348v4M689.5 348v4M688 351.5h3M722.5 348v4M724.5 348v4M789.5 348v4M788 351.5h3M822.5 348v4M824.5 348v4M856.5 348v4M858.5 348v4M889 348l1.5 2l1.5 -2M890.5 350v2M922.5 348v4M924.5 348v4M1056 348.5h2v3h-2M1124 348.5h2v3h-2M1157.5 348v4M1159.5 348v4M1191.5 348v4M1190 351.5h3M470.5 364v4M472.5 364v4M537.5 364v4M539.5 364v4M604.5 364v4M606.5 364v4M638 364.5h2v3h-2M705 364.5h2v3h-2M738.5 364v4M740.5 364v4M772 364.5h2v3h-2M805.5 364v4M807.5 364v4M839.5 364v4M841.5 364v4M906 364.5h2v3h-2M1241 364.5h2v3h-2M454.5 381v4M456.5 381v4M521.5 381v4M520 384.5h3M554.5 381v4M556.5 381v4M588.5 381v4M590.5 381v4M621 381.5h2v3h-2M654.5 381v4M656.5 381v4M688 381.5h2v3h-2M788.5 381v4M790.5 381v4M856.5 381v4M858.5 381v4M890.5 381v4M889 384.5h3M956.5 381v4M958.5 381v4M990.5 381v4M992.5 381v4M1023.5 381v4M1025.5 381v4M1056 381l1.5 2l1.5 -2M1057.5 383v2M1090.5 381v4M1092.5 381v4M1124.5 381v4M1126.5 381v4M1157.5 381v4M1159.5 381v4M1190.5 381v4M1192.5 381v4M1224.5 381v4M1226.5 381v4M1291.5 381v4M1293.5 381v4M470 398.5h2v3h-2M505.5 398v4M504 401.5h3M537 398.5h2v3h-2M638 398.5h2v3h-2M671.5 398v4M673.5 398v4M706.5 398v4M705 401.5h3M738 398.5h2v3h-2M772.5 398v4M774.5 398v4M805 398.5h2v3h-2M840.5 398v4M839 401.5h3M872 398.5h2v3h-2M906 398.5h2v3h-2M973.5 398v4M975.5 398v4M1006.5 398v4M1008.5 398v4M1040 398.5h2v3h-2M1073 398.5h2v3h-2M1141.5 398v4M1140 401.5h3M1174 398.5h2v3h-2M454 414.5h2v3h-2M487.5 414v4M489.5 414v4M520.5 414v4M522.5 414v4M555.5 414v4M554 417.5h3M755 414.5h2v3h-2M822 414.5h2v3h-2M922 414l1.5 2l1.5 -2M923.5 416v2M956.5 414v4M958.5 414v4M991.5 414v4M990 417.5h3M1056.5 414v4M1058.5 414v4M1090.5 414v4M1092.5 414v4M1124.5 414v4M1126.5 414v4M1191.5 414v4M1190 417.5h3M1225.5 414v4M1224 417.5h3M1258.5 414v4M1260.5 414v4M1324.5 414v4M1326.5 414v4M504.5 431v4M506.5 431v4M537.5 431v4M539.5 431v4M604 431l1.5 2l1.5 -2M605.5 433v2M671.5 431v4M673.5 431v4M705 431l1.5 2l1.5 -2M706.5 433v2M738.5 431v4M740.5 431v4M805.5 431v4M807.5 431v4M839.5 431v4M841.5 431v4M939.5 431v4M941.5 431v4M974.5 431v4M973 434.5h3M1006 431.5h2v3h-2M1040 431l1.5 2l1.5 -2M1041.5 433v2M1107 431.5h2v3h-2M1141.5 431v4M1140 434.5h3M1274.5 431v4M1276.5 431v4M420 448.5h2v3h-2M487.5 448v4M489.5 448v4M554 448l1.5 2l1.5 -2M555.5 450v2M722 448.5h2v3h-2M755 448.5h2v3h-2M788.5 448v4M790.5 448v4M922 448.5h2v3h-2M1023.5 448v4M1025.5 448v4M1056 448l1.5 2l1.5 -2M1057.5 450v2M1124.5 448v4M1126.5 448v4M1158.5 448v4M1157 451.5h3M1224.5 448v4M1226.5 448v4M1259.5 448v4M1258 451.5h3M437 465.5h2v3h-2M470 465l1.5 2l1.5 -2M471.5 467v2M504 465.5h2v3h-2M537.5 465v4M539.5 465v4M571.5 465v4M573.5 465v4M604.5 465v4M606.5 465v4M705 465.5h2v3h-2M772 465.5h2v3h-2M872.5 465v4M874.5 465v4M906 465l1.5 2l1.5 -2M907.5 467v2M940.5 465v4M939 468.5h3M1006 465l1.5 2l1.5 -2M1007.5 467v2M1073.5 465v4M1075.5 465v4M1140 465.5h2v3h-2M1207.5 465v4M1209.5 465v4M1275.5 465v4M1274 468.5h3M454.5 482v4M456.5 482v4M487.5 482v4M489.5 482v4M554.5 482v4M556.5 482v4M588 482.5h2v3h-2M621.5 482v4M623.5 482v4M654.5 482v4M656.5 482v4M722.5 482v4M724.5 482v4M756.5 482v4M755 485.5h3M788 482.5h2v3h-2M856.5 482v4M858.5 482v4M922 482.5h2v3h-2M1023.5 482v4M1025.5 482v4M1124.5 482v4M1126.5 482v4M1158.5 482v4M1157 485.5h3M1190.5 482v4M1192.5 482v4M1224.5 482v4M1226.5 482v4M1258.5 482v4M1260.5 482v4M1324.5 482v4M1326.5 482v4M504 498.5h2v3h-2M571 498l1.5 2l1.5 -2M572.5 500v2M604.5 498v4M606.5 498v4M671.5 498v4M673.5 498v4M705 498l1.5 2l1.5 -2M706.5 500v2M772.5 498v4M774.5 498v4M805 498l1.5 2l1.5 -2M806.5 500v2M872.5 498v4M874.5 498v4M940.5 498v4M939 501.5h3M974.5 498v4M973 501.5h3M1040.5 498v4M1042.5 498v4M1107.5 498v4M1109.5 498v4M1174.5 498v4M1176.5 498v4M1207.5 498v4M1209.5 498v4M1242.5 498v4M1241 501.5h3M1308.5 498v4M1310.5 498v4M1341 498.5h2v3h-2M454.5 515v4M456.5 515v4M487 515.5h2v3h-2M520 515.5h2v3h-2M621 515.5h2v3h-2M722.5 515v4M724.5 515v4M788.5 515v4M790.5 515v4M857.5 515v4M856 518.5h3M922.5 515v4M924.5 515v4M957.5 515v4M956 518.5h3M1056 515l1.5 2l1.5 -2M1057.5 517v2M1090 515l1.5 2l1.5 -2M1091.5 517v2M1125.5 515v4M1124 518.5h3M1157.5 515v4M1159.5 515v4M1224 515.5h2v3h-2M1258.5 515v4M1260.5 515v4M1324.5 515v4M1326.5 515v4M572.5 532v4M571 535.5h3M638.5 532v4M640.5 532v4M705.5 532v4M707.5 532v4M772.5 532v4M774.5 532v4M805.5 532v4M807.5 532v4M839.5 532v4M841.5 532v4M873.5 532v4M872 535.5h3M973.5 532v4M975.5 532v4M1006.5 532v4M1008.5 532v4M1040.5 532v4M1042.5 532v4M1107.5 532v4M1109.5 532v4M1140 532.5h2v3h-2M1174.5 532v4M1176.5 532v4M1207.5 532v4M1209.5 532v4M1274 532.5h2v3h-2M1308.5 532v4M1310.5 532v4M1342.5 532v4M1341 535.5h3M487 548l1.5 2l1.5 -2M488.5 550v2M554 548l1.5 2l1.5 -2M555.5 550v2M588 548l1.5 2l1.5 -2M589.5 550v2M688.5 548v4M690.5 548v4M755.5 548v4M757.5 548v4M788 548.5h2v3h-2M856 548.5h2v3h-2M889.5 548v4M891.5 548v4M990 548.5h2v3h-2M1056.5 548v4M1058.5 548v4M1090.5 548v4M1092.5 548v4M1124.5 548v4M1126.5 548v4M1157.5 548v4M1159.5 548v4M1225.5 548v4M1224 551.5h3M1324.5 548v4M1326.5 548v4M1358.5 548v4M1360.5 548v4M571 565.5h2v3h-2M638 565.5h2v3h-2M706.5 565v4M705 568.5h3M738 565.5h2v3h-2M772.5 565v4M774.5 565v4M805.5 565v4M807.5 565v4M873.5 565v4M872 568.5h3M906.5 565v4M908.5 565v4M1040 565.5h2v3h-2M1174.5 565v4M1176.5 565v4M1207 565.5h2v3h-2M1241.5 565v4M1243.5 565v4M1274.5 565v4M1276.5 565v4M1308 565.5h2v3h-2M1342.5 565v4M1341 568.5h3M1375 565.5h2v3h-2M487.5 582v4M489.5 582v4M520 582.5h2v3h-2M588 582l1.5 2l1.5 -2M589.5 584v2M621.5 582v4M623.5 582v4M755 582.5h2v3h-2M788 582.5h2v3h-2M889 582.5h2v3h-2M922 582.5h2v3h-2M1023.5 582v4M1025.5 582v4M1056.5 582v4M1058.5 582v4M1090.5 582v4M1092.5 582v4M1157 582.5h2v3h-2M1190.5 582v4M1192.5 582v4M1258.5 582v4M1260.5 582v4M1292.5 582v4M1291 585.5h3M1358.5 582v4M1360.5 582v4M504 599.5h2v3h-2M537 599.5h2v3h-2M571 599l1.5 2l1.5 -2M572.5 601v2M604.5 599v4M606.5 599v4M638.5 599v4M640.5 599v4M705.5 599v4M707.5 599v4M738.5 599v4M740.5 599v4M805.5 599v4M807.5 599v4M839 599.5h2v3h-2M939.5 599v4M941.5 599v4M974.5 599v4M973 602.5h3M1006.5 599v4M1008.5 599v4M1040 599.5h2v3h-2M1073 599.5h2v3h-2M1174.5 599v4M1176.5 599v4M1207 599.5h2v3h-2M1274 599.5h2v3h-2M1309.5 599v4M1308 602.5h3M1341.5 599v4M1343.5 599v4M554 616.5h2v3h-2M654.5 616v4M656.5 616v4M688 616.5h2v3h-2M722 616.5h2v3h-2M755.5 616v4M757.5 616v4M788 616.5h2v3h-2M822.5 616v4M824.5 616v4M889.5 616v4M891.5 616v4M922.5 616v4M924.5 616v4M990.5 616v4M992.5 616v4M1090 616.5h2v3h-2M1124 616.5h2v3h-2M1157.5 616v4M1159.5 616v4M1190.5 616v4M1192.5 616v4M1225.5 616v4M1224 619.5h3M1258.5 616v4M1260.5 616v4M1291 616l1.5 2l1.5 -2M1292.5 618v2M1393.5 616v4M1392 619.5h3M504 632.5h2v3h-2M638.5 632v4M640.5 632v4M705.5 632v4M707.5 632v4M772 632l1.5 2l1.5 -2M773.5 634v2M806.5 632v4M805 635.5h3M839.5 632v4M841.5 632v4M872.5 632v4M874.5 632v4M906.5 632v4M908.5 632v4M1074.5 632v4M1073 635.5h3M1107.5 632v4M1109.5 632v4M1140.5 632v4M1142.5 632v4M1174.5 632v4M1176.5 632v4M1207.5 632v4M1209.5 632v4M1241.5 632v4M1243.5 632v4M1308 632.5h2v3h-2M1341.5 632v4M1343.5 632v4M1375.5 632v4M1377.5 632v4M520 649.5h2v3h-2M554 649.5h2v3h-2M588.5 649v4M590.5 649v4M722 649l1.5 2l1.5 -2M723.5 651v2M755.5 649v4M757.5 649v4M788.5 649v4M790.5 649v4M822 649.5h2v3h-2M857.5 649v4M856 652.5h3M922.5 649v4M924.5 649v4M956 649.5h2v3h-2M990.5 649v4M992.5 649v4M1024.5 649v4M1023 652.5h3M1056.5 649v4M1058.5 649v4M1157 649.5h2v3h-2M1324 649l1.5 2l1.5 -2M1325.5 651v2M1358.5 649v4M1360.5 649v4M1392.5 649v4M1394.5 649v4M504 666l1.5 2l1.5 -2M505.5 668v2M537 666.5h2v3h-2M571.5 666v4M573.5 666v4M671.5 666v4M673.5 666v4M705 666.5h2v3h-2M738 666.5h2v3h-2M772.5 666v4M774.5 666v4M805.5 666v4M807.5 666v4M839 666l1.5 2l1.5 -2M840.5 668v2M872 666.5h2v3h-2M939 666.5h2v3h-2M974.5 666v4M973 669.5h3M1007.5 666v4M1006 669.5h3M1040 666.5h2v3h-2M1073.5 666v4M1075.5 666v4M1107.5 666v4M1109.5 666v4M1141.5 666v4M1140 669.5h3M1207.5 666v4M1209.5 666v4M1241 666.5h2v3h-2M1274 666.5h2v3h-2M1308.5 666v4M1310.5 666v4M1342.5 666v4M1341 669.5h3M1375.5 666v4M1377.5 666v4M520.5 682v4M522.5 682v4M554.5 682v4M556.5 682v4M588 682l1.5 2l1.5 -2M589.5 684v2M621.5 682v4M623.5 682v4M654 682.5h2v3h-2M688 682.5h2v3h-2M723.5 682v4M722 685.5h3M755.5 682v4M757.5 682v4M788.5 682v4M790.5 682v4M822.5 682v4M824.5 682v4M856.5 682v4M858.5 682v4M922.5 682v4M924.5 682v4M956.5 682v4M958.5 682v4M990.5 682v4M992.5 682v4M1056.5 682v4M1058.5 682v4M1090 682l1.5 2l1.5 -2M1091.5 684v2M1124.5 682v4M1126.5 682v4M1190.5 682v4M1192.5 682v4M1225.5 682v4M1224 685.5h3M1258.5 682v4M1260.5 682v4M1291.5 682v4M1293.5 682v4M1324.5 682v4M1326.5 682v4M1359.5 682v4M1358 685.5h3M605.5 699v4M604 702.5h3M738.5 699v4M740.5 699v4M805.5 699v4M807.5 699v4M839.5 699v4M841.5 699v4M872 699.5h2v3h-2M906 699l1.5 2l1.5 -2M907.5 701v2M939.5 699v4M941.5 699v4M973 699l1.5 2l1.5 -2M974.5 701v2M1006.5 699v4M1008.5 699v4M1073.5 699v4M1075.5 699v4M1174.5 699v4M1176.5 699v4M1241 699l1.5 2l1.5 -2M1242.5 701v2M1274.5 699v4M1276.5 699v4M1308 699.5h2v3h-2M554 716.5h2v3h-2M589.5 716v4M588 719.5h3M621.5 716v4M623.5 716v4M654 716.5h2v3h-2M688.5 716v4M690.5 716v4M856.5 716v4M858.5 716v4M889 716.5h2v3h-2M922.5 716v4M924.5 716v4M956.5 716v4M958.5 716v4M990 716.5h2v3h-2M1124.5 716v4M1126.5 716v4M1190 716.5h2v3h-2M1224.5 716v4M1226.5 716v4M1258 716.5h2v3h-2M1291.5 716v4M1293.5 716v4M571 733.5h2v3h-2M638 733.5h2v3h-2M671.5 733v4M673.5 733v4M705.5 733v4M707.5 733v4M738 733.5h2v3h-2M772.5 733v4M774.5 733v4M805.5 733v4M807.5 733v4M873.5 733v4M872 736.5h3M939 733.5h2v3h-2M973 733.5h2v3h-2M1207.5 733v4M1209.5 733v4M1241 733.5h2v3h-2M1274.5 733v4M1276.5 733v4M589.5 750v4M588 753.5h3M688 750l1.5 2l1.5 -2M689.5 752v2M722 750.5h2v3h-2M755 750l1.5 2l1.5 -2M756.5 752v2M788 750.5h2v3h-2M822 750.5h2v3h-2M889 750.5h2v3h-2M1191.5 750v4M1190 753.5h3M1224 750.5h2v3h-2M1259.5 750v4M1258 753.5h3M638.5 766v4M640.5 766v4M671.5 766v4M673.5 766v4M705 766.5h2v3h-2M738.5 766v4M740.5 766v4M806.5 766v4M805 769.5h3M839 766l1.5 2l1.5 -2M840.5 768v2M872.5 766v4M874.5 766v4M906 766.5h2v3h-2M939 766l1.5 2l1.5 -2M940.5 768v2M654.5 783v4M656.5 783v4M688.5 783v4M690.5 783v4M722.5 783v4M724.5 783v4M856.5 783v4M858.5 783v4M889 783.5h2v3h-2M1224 783.5h2v3h-2M638.5 800v4M640.5 800v4M671.5 800v4M673.5 800v4M738.5 800v4M740.5 800v4M805.5 800v4M807.5 800v4M839.5 800v4M841.5 800v4M654.5 816v4M656.5 816v4M688.5 816v4M690.5 816v4M722.5 816v4M724.5 816v4M755.5 816v4M757.5 816v4M788 816.5h2v3h-2M822.5 816v4M824.5 816v4M856 816l1.5 2l1.5 -2M857.5 818v2M705.5 833v4M707.5 833v4M738 833.5h2v3h-2M772.5 833v4M774.5 833v4M805 833l1.5 2l1.5 -2M806.5 835v2M688.5 850v4M690.5 850v4M722.5 850v4M724.5 850v4M755 850.5h2v3h-2" stroke="#8a8d91" stroke-width="0.9" fill="none"/><path d="M530.0 397.0 C526.7 399.7 515.7 408.2 510.0 413.0 C504.3 417.8 500.1 419.6 496.0 426.0 C491.9 432.4 487.3 443.5 485.4 451.5 C483.5 459.5 484.3 466.6 484.6 474.0 C484.9 481.4 484.9 486.9 487.0 496.0 C489.1 505.1 493.2 517.6 497.5 528.6 C501.8 539.6 506.1 549.9 513.0 562.0 C519.9 574.1 532.2 589.0 539.0 601.0 C545.8 613.0 548.0 624.8 554.0 634.0 C560.0 643.2 568.2 645.5 575.0 656.0 C581.8 666.5 588.2 686.8 595.0 697.0 C601.8 707.2 606.1 709.8 616.0 717.5 C625.9 725.2 641.7 734.9 654.5 743.0 C667.3 751.1 679.2 758.5 693.0 766.0 C706.8 773.5 724.2 785.0 737.0 788.0 C749.8 791.0 754.5 787.2 770.0 784.0 C785.5 780.8 816.5 772.3 830.0 769.0 C843.5 765.7 842.0 766.2 851.0 764.0 C860.0 761.8 875.5 760.3 884.0 756.0 C892.5 751.7 898.1 745.3 902.0 738.0 C905.9 730.7 904.0 721.4 907.5 712.0 C911.0 702.6 917.4 691.3 923.0 681.5 C928.6 671.7 934.6 660.9 941.0 653.0 C947.4 645.1 954.2 641.3 961.5 634.0 C968.8 626.7 976.9 616.2 985.0 609.0 C993.1 601.8 1001.0 594.0 1010.0 591.0 C1019.0 588.0 1029.9 587.7 1039.0 591.0 C1048.1 594.3 1058.2 604.5 1064.5 611.0 C1070.8 617.5 1068.4 623.8 1077.0 630.0 C1085.6 636.2 1104.0 642.0 1116.0 648.0 C1128.0 654.0 1138.3 660.4 1149.0 666.0 C1159.7 671.6 1168.8 675.3 1180.0 681.5 C1191.2 687.7 1206.8 701.8 1216.0 703.0 C1225.2 704.2 1230.5 694.7 1235.0 689.0 C1239.5 683.3 1241.2 678.2 1243.0 669.0 C1244.8 659.8 1244.7 642.3 1245.5 634.0 C1246.3 625.7 1245.0 622.8 1248.0 619.0 C1251.0 615.2 1254.9 614.0 1263.5 611.0 C1272.1 608.0 1292.2 603.5 1299.5 601.0 C1306.8 598.5 1305.2 599.5 1307.0 596.0 C1308.8 592.5 1313.0 588.7 1310.0 580.0 C1307.0 571.3 1294.4 551.3 1289.0 544.0 C1283.6 536.7 1283.6 537.2 1277.6 536.0 C1271.6 534.8 1259.6 535.8 1253.0 536.5 C1246.4 537.2 1242.8 538.8 1238.0 540.0 C1233.2 541.2 1228.3 541.6 1224.0 544.0 C1219.7 546.4 1215.8 551.5 1212.0 554.5 C1208.2 557.5 1207.2 560.1 1201.0 562.0 C1194.8 563.9 1183.2 567.2 1175.0 566.0 C1166.8 564.8 1155.4 559.0 1152.0 554.5 C1148.6 550.0 1149.8 544.6 1154.5 539.0 C1159.2 533.4 1173.6 532.2 1180.0 521.0 C1186.4 509.8 1192.2 488.7 1193.0 472.0 C1193.8 455.3 1188.3 433.8 1185.0 421.0 C1181.7 408.2 1178.0 401.7 1173.0 395.0 C1168.0 388.3 1166.7 390.8 1155.0 381.0 C1143.3 371.2 1116.0 347.5 1103.0 336.0 C1090.0 324.5 1085.5 323.3 1077.0 312.0 C1068.5 300.7 1058.8 277.8 1052.0 268.0 C1045.2 258.2 1041.2 250.4 1036.0 253.0 C1030.8 255.6 1027.0 269.4 1021.0 283.5 C1015.0 297.6 1007.8 324.4 1000.0 337.6 C992.2 350.9 985.2 356.6 974.0 363.0 C962.8 369.4 943.2 369.3 933.0 376.0 C922.8 382.7 919.9 393.3 912.6 403.0 C905.4 412.7 895.1 424.7 889.5 434.0 C883.9 443.3 882.9 453.0 879.0 459.0 C875.1 465.0 871.5 469.1 866.0 470.0 C860.5 470.9 853.7 469.3 846.0 464.5 C838.3 459.7 827.0 448.2 820.0 441.0 C813.0 433.8 810.5 428.7 804.0 421.0 C797.5 413.3 786.7 401.2 781.0 395.0 C775.3 388.8 776.1 389.7 770.0 384.0 C763.9 378.3 753.0 369.2 744.5 361.0 C736.0 352.8 725.4 341.5 719.0 335.0 C712.6 328.5 710.3 324.3 706.0 322.0 C701.7 319.7 700.3 320.2 693.0 321.0 C685.7 321.8 672.7 323.0 662.0 327.0 C651.3 331.0 639.7 340.2 629.0 345.0 C618.3 349.8 605.3 352.5 598.0 356.0 C590.7 359.5 592.3 361.3 585.0 366.0 C577.7 370.7 563.2 378.8 554.0 384.0 C544.8 389.2 534.0 394.8 530.0 397.0" fill="none" stroke="#b23cb4" stroke-width="1.1" stroke-dasharray="4 2"/><path d="M568 669.5H613M620 669.5H665M616.5 620V666M616.5 673V718" stroke="#ffffff" stroke-width="1.3"/><rect x="613.5" y="666.5" width="6" height="6" fill="none" stroke="#fff" stroke-width="1"/></svg><div class="a" style="left:0;top:540px;width:2px;height:404px;background:#a6a6a6"></div><div class="a" style="left:0;top:538px;width:285px;height:3px;background:#d4d4d4"></div><div class="a" style="left:0;top:0;width:1632px;height:2px;background:#3c3c3c"></div><div class="a" style="left:283px;top:2px;width:1349px;height:98px;background:linear-gradient(#d4d4d4,#a9a9a9)"></div><div class="a" style="left:285px;top:2px;width:1068px;height:80px;background:#fefefe"></div><div class="a" style="left:285px;top:82px;width:1068px;height:18px;background:#efefef;border-top:1px solid #e4e4e4"></div><div class="a" style="left:283px;top:100px;width:1349px;height:1px;background:#f6f6f6"></div><div class="a" style="left:283px;top:101px;width:1349px;height:27px;background:linear-gradient(#a9a9a9,#9a9a9a)"></div><div class="a" style="left:283px;top:128px;width:1349px;height:5px;background:#6f6f6f"></div><div class="a" style="left:283px;top:133px;width:1349px;height:1px;background:#a4a4a4"></div><div class="a" style="left:438px;top:4px;width:1px;height:96px;background:#d0d0d0"></div><div class="a" style="left:652px;top:4px;width:1px;height:96px;background:#d0d0d0"></div><div class="a" style="left:770px;top:4px;width:1px;height:96px;background:#d0d0d0"></div><div class="a" style="left:904px;top:4px;width:1px;height:96px;background:#d0d0d0"></div><div class="a" style="left:1109px;top:4px;width:1px;height:96px;background:#d0d0d0"></div><div class="a" style="left:1177px;top:4px;width:1px;height:96px;background:#d0d0d0"></div><div class="a" style="left:1277px;top:4px;width:1px;height:96px;background:#d0d0d0"></div><div class="a" style="left:1353px;top:2px;width:1px;height:98px;background:#e8e8e8"></div><div class="t" style="left:307.0px;top:85px;font-size:12px;color:#333;"><span class="c">修改</span></div><svg class="a" style="left:337px;top:89px" width="8" height="5"><path d="M0 0H8L4.0 4.0Z" fill="#333"/></svg><div class="t" style="left:522.0px;top:85px;font-size:12px;color:#333;"><span class="c">图层</span></div><svg class="a" style="left:552px;top:89px" width="8" height="5"><path d="M0 0H8L4.0 4.0Z" fill="#333"/></svg><div class="t" style="left:695.0px;top:85px;font-size:12px;color:#333;"><span class="c">注释</span></div><svg class="a" style="left:725px;top:89px" width="8" height="5"><path d="M0 0H8L4.0 4.0Z" fill="#333"/></svg><div class="t" style="left:826.0px;top:85px;font-size:12px;color:#333;"><span class="c">块</span></div><svg class="a" style="left:844px;top:89px" width="8" height="5"><path d="M0 0H8L4.0 4.0Z" fill="#333"/></svg><div class="t" style="left:982.0px;top:85px;font-size:12px;color:#333;"><span class="c">特性</span></div><svg class="a" style="left:1012px;top:89px" width="8" height="5"><path d="M0 0H8L4.0 4.0Z" fill="#333"/></svg><div class="t" style="left:1125.0px;top:85px;font-size:12px;color:#333;"><span class="c">组</span></div><svg class="a" style="left:1143px;top:89px" width="8" height="5"><path d="M0 0H8L4.0 4.0Z" fill="#333"/></svg><div class="t" style="left:1197.0px;top:85px;font-size:12px;color:#333;"><span class="c">实用工具</span></div><svg class="a" style="left:1251px;top:89px" width="8" height="5"><path d="M0 0H8L4.0 4.0Z" fill="#333"/></svg><div class="t" style="left:1297.0px;top:85px;font-size:12px;color:#333;"><span class="c">剪贴板</span></div><svg class="a" style="left:1097px;top:87px" width="8" height="8"><path d="M1 1L7 7M7 3V7H3" stroke="#333" stroke-width="1.2" fill="none"/></svg><div class="t" style="left:299px;top:13px;font-size:12px;color:#333;"><span class="c">旋转</span></div><div class="t" style="left:358px;top:13px;font-size:12px;color:#333;"><span class="c">修剪</span></div><svg class="a" style="left:393px;top:18px" width="6" height="4"><path d="M0 0H6L3.0 3.0Z" fill="#333"/></svg><div class="t" style="left:299px;top:37px;font-size:12px;color:#333;"><span class="c">镜像</span></div><div class="t" style="left:358px;top:37px;font-size:12px;color:#333;"><span class="c">圆角</span></div><svg class="a" style="left:393px;top:42px" width="6" height="4"><path d="M0 0H6L3.0 3.0Z" fill="#333"/></svg><div class="t" style="left:299px;top:61px;font-size:12px;color:#333;"><span class="c">缩放</span></div><div class="t" style="left:358px;top:61px;font-size:12px;color:#333;"><span class="c">阵列</span></div><svg class="a" style="left:389px;top:66px" width="6" height="4"><path d="M0 0H6L3.0 3.0Z" fill="#333"/></svg><svg class="a" style="left:285px;top:8px" width="12" height="72"><path d="M1 4A7 7 0 1 1 1 18" stroke="#333" stroke-width="1.5" fill="none"/><path d="M1 30L6 44H1Z" fill="#a9d3f0" stroke="#2a6fb0"/><rect x="0" y="32" width="2" height="14" fill="#111"/><rect x="0" y="52" width="10" height="16" fill="#a9d3f0" stroke="#2a6fb0" stroke-width="1.5"/></svg><svg class="a" style="left:336px;top:10px" width="18" height="68"><path d="M1 9H4M13 9H17" stroke="#2a6fb0" stroke-width="1.3"/><path d="M5 14L10 3" stroke="#2a6fb0" stroke-width="1.5"/><path d="M11 9H12" stroke="#333"/><path d="M1 39V31Q1 25 9 25H15V40H1Z" fill="#e6e8ec" stroke="#222" stroke-width="1.3"/><rect x="1" y="48" width="6" height="6" fill="#a9d3f0" stroke="#2a6fb0" stroke-width="1.3"/><rect x="10" y="48" width="6" height="6" fill="#fff" stroke="#2a6fb0" stroke-width="1.3"/><rect x="1" y="58" width="6" height="6" fill="#a9d3f0" stroke="#2a6fb0" stroke-width="1.3"/><rect x="10" y="58" width="6" height="6" fill="#a9d3f0" stroke="#2a6fb0" stroke-width="1.3"/></svg><div class="a" style="left:408px;top:8px;width:24px;height:22px;background:linear-gradient(#fafafa,#f4f4f4);border:1px solid #d6d6d6;border-radius:2px"></div><div class="a" style="left:408px;top:32px;width:24px;height:22px;background:linear-gradient(#fafafa,#f4f4f4);border:1px solid #d6d6d6;border-radius:2px"></div><div class="a" style="left:408px;top:56px;width:24px;height:22px;background:linear-gradient(#fafafa,#f4f4f4);border:1px solid #d6d6d6;border-radius:2px"></div><svg class="a" style="left:410px;top:10px" width="20" height="66"><path d="M5 16L16 4" stroke="#c8a070" stroke-width="3"/><circle cx="5" cy="16" r="3" fill="#a0501a"/><path d="M2 19H18" stroke="#333"/><path d="M3 34L8 30H16L12 34Z M3 34H12V41H3Z M12 34L16 30V37L12 41" fill="#cde6f7" stroke="#2a6fb0" stroke-width="1.4"/><path d="M3 64H17V60H11V55Q11 50 8 50Q5 50 5 55V58Q2 59 2 62Z" fill="#cde6f7" stroke="#111" stroke-width="1.5"/></svg><div class="a" style="left:441px;top:7px;width:23px;height:22px;background:linear-gradient(#fafafa,#f4f4f4);border:1px solid #d6d6d6;border-radius:2px"></div><div class="a" style="left:469px;top:7px;width:24px;height:22px;background:linear-gradient(#fafafa,#f4f4f4);border:1px solid #d6d6d6;border-radius:2px"></div><div class="a" style="left:497px;top:7px;width:48px;height:22px;background:linear-gradient(#fafafa,#f4f4f4);border:1px solid #d6d6d6;border-radius:2px"></div><div class="a" style="left:521px;top:8px;width:1px;height:20px;background:#e0e0e0"></div><div class="a" style="left:549px;top:7px;width:48px;height:22px;background:linear-gradient(#fafafa,#f4f4f4);border:1px solid #d6d6d6;border-radius:2px"></div><div class="a" style="left:573px;top:8px;width:1px;height:20px;background:#e0e0e0"></div><div class="a" style="left:601px;top:7px;width:48px;height:22px;background:linear-gradient(#fafafa,#f4f4f4);border:1px solid #d6d6d6;border-radius:2px"></div><div class="a" style="left:625px;top:8px;width:1px;height:20px;background:#e0e0e0"></div><svg class="a" style="left:445px;top:9px" width="18" height="19"><path d="M2 6L6 2H14L10 6Z" fill="none" stroke="#333"/><path d="M2 9L6 5H14L10 9Z" fill="none" stroke="#333"/><path d="M2 12L6 8H14L10 12Z" fill="#fff" stroke="#333"/><rect x="9" y="8" width="6" height="10" fill="#fff" stroke="#333"/></svg><svg class="a" style="left:472px;top:9px" width="18" height="19"><path d="M2 6L6 2H14L10 6Z" fill="none" stroke="#333"/><path d="M2 9L6 5H14L10 9Z" fill="none" stroke="#333"/><path d="M2 12L6 8H14L10 12Z" fill="#fff" stroke="#333"/><circle cx="9" cy="4" r="2.5" fill="#cde6f7" stroke="#333"/><path d="M2 12L6 8H14L10 12Z" fill="#a9d3f0" stroke="#333"/></svg><svg class="a" style="left:500px;top:9px" width="18" height="19"><path d="M2 6L6 2H14L10 6Z" fill="none" stroke="#333"/><path d="M2 9L6 5H14L10 9Z" fill="none" stroke="#333"/><path d="M2 12L6 8H14L10 12Z" fill="#fff" stroke="#333"/><path d="M10 16L17 9" stroke="#a0501a" stroke-width="3"/></svg><svg class="a" style="left:525px;top:9px" width="18" height="19"><path d="M2 6L6 2H14L10 6Z" fill="none" stroke="#333"/><path d="M2 9L6 5H14L10 9Z" fill="none" stroke="#333"/><path d="M2 12L6 8H14L10 12Z" fill="#fff" stroke="#333"/><path d="M2 4H5" stroke="#111"/></svg><svg class="a" style="left:553px;top:9px" width="18" height="19"><path d="M2 6L6 2H14L10 6Z" fill="none" stroke="#333"/><path d="M2 9L6 5H14L10 9Z" fill="none" stroke="#333"/><path d="M2 12L6 8H14L10 12Z" fill="#fff" stroke="#333"/><path d="M2 12L6 8H14L10 12Z" fill="#a9d3f0" stroke="#2a6fb0"/><path d="M12 14L16 18" stroke="#111" stroke-width="1.5"/></svg><svg class="a" style="left:577px;top:9px" width="18" height="19"><path d="M2 6L6 2H14L10 6Z" fill="none" stroke="#333"/><path d="M2 9L6 5H14L10 9Z" fill="none" stroke="#333"/><path d="M2 12L6 8H14L10 12Z" fill="#fff" stroke="#333"/><path d="M2 12L6 8H14L10 12Z" fill="#a9d3f0" stroke="#2a6fb0"/><path d="M12 14L16 18" stroke="#111" stroke-width="1.5"/></svg><svg class="a" style="left:605px;top:9px" width="18" height="19"><path d='M2 10L7 4H16L11 10Z' fill='none' stroke='#333'/><circle cx="11" cy="13" r="4" fill="#fff" stroke="#2a6fb0" stroke-width="1.5"/></svg><svg class="a" style="left:629px;top:9px" width="18" height="19"><path d='M2 10L7 4H16L11 10Z' fill='none' stroke='#333'/><path d="M11 10A3 3 0 1 1 15 10V14H11Z" fill="#cde6f7" stroke="#2a6fb0" stroke-width="1.2"/></svg><div class="a" style="left:441px;top:31px;width:209px;height:24px;background:linear-gradient(#fdfdfd,#ececec);border:1px solid #d2d2d2;border-radius:2px"></div><div class="t" style="left:444px;top:37px;font-size:13px;color:#333;"><span class="c">未保存的图层状态</span></div><svg class="a" style="left:637px;top:41px" width="9" height="5"><path d="M0 0H9L4.5 4.5Z" fill="#333"/></svg><div class="a" style="left:441px;top:57px;width:208px;height:22px;background:linear-gradient(#fdfdfd,#ececec);border:1px solid #d2d2d2;border-radius:2px"></div><svg class="a" style="left:637px;top:66px" width="9" height="5"><path d="M0 0H9L4.5 4.5Z" fill="#333"/></svg><div class="t" style="left:664px;top:9px;font-size:38px;color:#3a3a3a;font-weight:bold;transform:scaleX(0.92)">A</div><div class="t" style="left:666px;top:48px;font-size:12px;color:#333;"><span class="c">文字</span></div><svg class="a" style="left:675px;top:65px" width="6" height="4"><path d="M0 0H6L3.0 3.0Z" fill="#333"/></svg><svg class="a" style="left:705px;top:10px" width="18" height="66"><path d="M1 2V16M16 2V16M1 9H16" stroke="#333" stroke-width="1.4"/><path d="M3 9L6 7V11Z M14 9L11 7V11Z" fill="#333"/><path d="M2 41L7 31Q9 27 11 29" stroke="#333" stroke-width="1.5" fill="none"/><circle cx="13" cy="27" r="3.5" fill="#fff" stroke="#333" stroke-width="1.3"/><path d="M0 42L4 37L3 42Z" fill="#333"/><rect x="1" y="50" width="15" height="15" fill="#fff" stroke="#333" stroke-width="1.4"/><path d="M1 54H16M1 58H16M1 62H16M6 54V65M11 54V65" stroke="#888"/><rect x="1" y="50" width="15" height="3" fill="#888"/></svg><div class="t" style="left:727px;top:13px;font-size:12px;color:#333;"><span class="c">线性</span></div><svg class="a" style="left:759px;top:18px" width="5" height="3"><path d="M0 0H5L2.5 2.5Z" fill="#333"/></svg><div class="t" style="left:727px;top:37px;font-size:12px;color:#333;"><span class="c">引线</span></div><svg class="a" style="left:759px;top:42px" width="5" height="3"><path d="M0 0H5L2.5 2.5Z" fill="#333"/></svg><div class="t" style="left:727px;top:61px;font-size:12px;color:#333;"><span class="c">表格</span></div><svg class="a" style="left:776px;top:10px" width="34" height="32"><path d="M13 1H23L28 6V26H13Z" fill="#eef0f3" stroke="#333" stroke-width="1.2"/><rect x="2" y="9" width="20" height="16" fill="#e4e6ea" stroke="#333" stroke-width="1.2"/><circle cx="21" cy="23" r="7" fill="#f0f0f0" stroke="#333" stroke-width="1.2"/><rect x="0.5" y="23.5" width="3" height="3" fill="#fff" stroke="#333"/></svg><div class="t" style="left:780px;top:47px;font-size:12px;color:#333;"><span class="c">插入</span></div><svg class="a" style="left:815px;top:9px" width="20" height="68"><rect x="2" y="4" width="12" height="8" fill="#fff" stroke="#333" stroke-width="1.2"/><circle cx="13" cy="11" r="3.5" fill="#fff" stroke="#333"/><rect x="1" y="11" width="3" height="3" fill="#fff" stroke="#333"/><rect x="2" y="28" width="12" height="8" fill="#e8eaee" stroke="#333" stroke-width="1.2"/><circle cx="13" cy="35" r="3.5" fill="#fff" stroke="#333"/><path d="M15 22L12 27H15L13 31" stroke="#f0a000" stroke-width="1.5" fill="none"/><path d="M2 52L10 62L18 52Z" fill="#fff" stroke="#333" stroke-width="1.2"/><path d="M11 58L18 50" stroke="#c88a20" stroke-width="2.5"/><path d="M1 48L3 52" stroke="#333"/></svg><div class="t" style="left:837px;top:13px;font-size:12px;color:#333;"><span class="c">创建</span></div><div class="t" style="left:837px;top:37px;font-size:12px;color:#333;"><span class="c">编辑</span></div><div class="t" style="left:837px;top:61px;font-size:12px;color:#333;"><span class="c">编辑属性</span></div><svg class="a" style="left:893px;top:66px" width="5" height="3"><path d="M0 0H5L2.5 2.5Z" fill="#333"/></svg><svg class="a" style="left:908px;top:11px" width="18" height="66"><defs><linearGradient id="cw" x1="0" y1="0" x2="0" y2="1"><stop offset="0" stop-color="#f3d23a"/><stop offset="0.35" stop-color="#48b848"/><stop offset="0.5" stop-color="#e03030"/><stop offset="0.7" stop-color="#3a5ad0"/><stop offset="1" stop-color="#a040c0"/></linearGradient></defs><circle cx="9" cy="9" r="8" fill="url(#cw)" stroke="#666" stroke-width="0.6"/><rect x="1" y="25" width="16" height="1.5" fill="#333"/><rect x="1" y="29" width="16" height="2" fill="#333"/><rect x="1" y="34" width="16" height="3" fill="#333"/><rect x="1" y="39" width="16" height="3" fill="#444"/><path d="M1 51H17M1 55H17M1 59H17M1 63H17" stroke="#333" stroke-width="1.2" stroke-dasharray="2 1"/></svg><div class="a" style="left:927px;top:8px;width:180px;height:23px;background:linear-gradient(#fdfdfd,#ececec);border:1px solid #d2d2d2;border-radius:2px"></div><svg class="a" style="left:1094px;top:17px" width="9" height="5"><path d="M0 0H9L4.5 4.5Z" fill="#333"/></svg><div class="a" style="left:927px;top:33px;width:180px;height:22px;background:linear-gradient(#fdfdfd,#ececec);border:1px solid #d2d2d2;border-radius:2px"></div><svg class="a" style="left:1094px;top:42px" width="9" height="5"><path d="M0 0H9L4.5 4.5Z" fill="#333"/></svg><div class="a" style="left:927px;top:57px;width:180px;height:22px;background:linear-gradient(#fdfdfd,#ececec);border:1px solid #d2d2d2;border-radius:2px"></div><svg class="a" style="left:1094px;top:66px" width="9" height="5"><path d="M0 0H9L4.5 4.5Z" fill="#333"/></svg><div class="a" style="left:931px;top:43px;width:64px;height:1.5px;background:#111"></div><div class="t" style="left:997px;top:37px;font-size:13px;color:#444;">ByLayer</div><svg class="a" style="left:1114px;top:9px" width="36" height="34"><rect x="1" y="1" width="18" height="31" fill="none" stroke="#111" stroke-dasharray="2 1.5"/><rect x="4" y="4" width="10" height="9" fill="#e8e090" stroke="#222" stroke-width="1.3"/><circle cx="9" cy="24" r="5.5" fill="#e4e6ea" stroke="#222" stroke-width="1.4"/><path d="M13 19L20 12" stroke="#333" stroke-width="1.2"/><path d="M23 2L23 20M14 11H32M17 5L29 17M29 5L17 17" stroke="#8cc8f0" stroke-width="1.2"/><circle cx="23" cy="11" r="3" fill="#fff"/></svg><div class="t" style="left:1125px;top:47px;font-size:12px;color:#333;"><span class="c">组</span></div><div class="a" style="left:1151px;top:8px;width:24px;height:22px;background:linear-gradient(#fafafa,#f4f4f4);border:1px solid #d6d6d6;border-radius:2px"></div><div class="a" style="left:1151px;top:32px;width:24px;height:22px;background:linear-gradient(#fafafa,#f4f4f4);border:1px solid #d6d6d6;border-radius:2px"></div><div class="a" style="left:1151px;top:56px;width:24px;height:22px;background:#b8d8f4;border:1px solid #3c78b0"></div><svg class="a" style="left:1154px;top:10px" width="20" height="66"><rect x="2" y="3" width="5" height="5" fill="#fff" stroke="#222"/><rect x="2" y="11" width="5" height="5" fill="#fff" stroke="#222"/><path d="M9 14L17 4" stroke="#c89a40" stroke-width="2.5"/><rect x="3" y="28" width="5" height="5" fill="#fff" stroke="#444"/><rect x="3" y="36" width="5" height="5" fill="#7ab0e0" stroke="#2a6fb0"/><path d="M11 31H16M13.5 28.5V33.5M11 38H16" stroke="#333" stroke-width="1.2"/><rect x="2" y="51" width="6" height="6" fill="#fff" stroke="#222"/><rect x="2" y="59" width="6" height="6" fill="#fff" stroke="#222"/><path d="M10 52V64L12.5 61.5L15 65L16.5 64L14 60.5H17Z" fill="#fff" stroke="#111"/></svg><svg class="a" style="left:1199px;top:16px" width="32" height="20"><path d="M2 1V10M30 1V10M2 6H30" stroke="#333" stroke-width="1.3"/><path d="M3 6L7 4V8Z M29 6L25 4V8Z" fill="#333"/><rect x="1.5" y="12.5" width="28" height="5" fill="#f0c020" stroke="#9a7a10"/></svg><div class="t" style="left:1191px;top:47px;font-size:12px;color:#333;"><span class="c">定距等分</span></div><svg class="a" style="left:1212px;top:65px" width="6" height="4"><path d="M0 0H6L3.0 3.0Z" fill="#333"/></svg><div class="a" style="left:1251px;top:8px;width:24px;height:22px;background:linear-gradient(#fafafa,#f4f4f4);border:1px solid #d6d6d6;border-radius:2px"></div><div class="a" style="left:1251px;top:32px;width:24px;height:22px;background:linear-gradient(#fafafa,#f4f4f4);border:1px solid #d6d6d6;border-radius:2px"></div><div class="a" style="left:1251px;top:56px;width:24px;height:22px;background:linear-gradient(#fafafa,#f4f4f4);border:1px solid #d6d6d6;border-radius:2px"></div><svg class="a" style="left:1254px;top:10px" width="20" height="66"><rect x="2" y="3" width="7" height="11" fill="#8fd07a" stroke="#2f6f2a"/><path d="M16 2L12 8H15L13 12" stroke="#f0a000" stroke-width="1.6" fill="none"/><path d="M7 7V18L9.5 15.5L12 19L13.5 18L11 14.5H14Z" fill="#fff" stroke="#111"/><circle cx="6" cy="34" r="4" fill="none" stroke="#2f6f2a" stroke-width="1.4"/><rect x="6" y="27" width="6" height="7" fill="#8fd07a" stroke="#2f6f2a"/><path d="M10 30V41L12.5 38.5L15 42L16.5 41L14 37.5H17Z" fill="#fff" stroke="#111"/><rect x="4" y="49" width="11" height="14" fill="#fff" stroke="#333" stroke-width="1.3"/><rect x="6" y="51" width="7" height="3" fill="#777"/><path d="M6 57H13M6 60H13" stroke="#555" stroke-dasharray="1 1"/></svg><svg class="a" style="left:1287px;top:9px" width="32" height="34"><path d="M2 5H21V29H2Z" fill="#b8b0a8" stroke="#555" stroke-width="1.2"/><rect x="7" y="2" width="9" height="5" rx="2" fill="#eee" stroke="#555"/><path d="M9 12H22L27 17V32H9Z" fill="#f2f4f6" stroke="#333" stroke-width="1.3"/><path d="M22 12V17H27" fill="none" stroke="#333"/></svg><div class="t" style="left:1291px;top:47px;font-size:12px;color:#333;"><span class="c">粘贴</span></div><svg class="a" style="left:1300px;top:65px" width="6" height="4"><path d="M0 0H6L3.0 3.0Z" fill="#333"/></svg><div class="a" style="left:1327px;top:8px;width:24px;height:22px;background:linear-gradient(#fafafa,#f4f4f4);border:1px solid #d6d6d6;border-radius:2px"></div><div class="a" style="left:1327px;top:32px;width:24px;height:22px;background:linear-gradient(#fafafa,#f4f4f4);border:1px solid #d6d6d6;border-radius:2px"></div><div class="a" style="left:1327px;top:56px;width:24px;height:22px;background:linear-gradient(#fafafa,#f4f4f4);border:1px solid #d6d6d6;border-radius:2px"></div><svg class="a" style="left:1329px;top:10px" width="20" height="66"><path d="M4 2L14 14M14 2L4 14" stroke="#222" stroke-width="1.5"/><circle cx="4" cy="15" r="2.2" fill="none" stroke="#222" stroke-width="1.2"/><circle cx="14" cy="15" r="2.2" fill="none" stroke="#222" stroke-width="1.2"/><path d="M3 27H10V37H3Z" fill="#fff" stroke="#222" stroke-width="1.2"/><path d="M7 30H13L16 33V42H7Z" fill="#fff" stroke="#222" stroke-width="1.2"/><rect x="2" y="49" width="13" height="14" fill="#fff" stroke="#222" stroke-width="1.2"/><rect x="4" y="51" width="6" height="5" fill="#2a5a9a"/><path d="M10 62L17 56" stroke="#b07020" stroke-width="3"/></svg><svg class="a" style="left:283px;top:104px" width="170" height="26"><defs><linearGradient id="tg" x1="0" y1="0" x2="0" y2="1"><stop offset="0" stop-color="#f6f6f6"/><stop offset="1" stop-color="#d4d4d4"/></linearGradient></defs><path d="M0 2H118Q124 2 127 10L131 22Q133 25 138 25H0Z" fill="url(#tg)"/><path d="M138 7Q134 7 136 12L140 22Q141 24 146 24H160Q158 19 154 12Q151 7 146 7Z" fill="#8a8a8a" stroke="#6a6a6a"/><path d="M145 13V19M142 16H148" stroke="#c8c8c8" stroke-width="2"/></svg><div class="t" style="left:283px;top:110px;font-size:13px;color:#333;margin-left:-6px"><span class="c">村委会</span> ) ( CJ002)*</div><svg class="a" style="left:389px;top:112px" width="9" height="9"><path d="M1 1L8 8M8 1L1 8" stroke="#9a9a9a" stroke-width="2"/></svg><div class="a" style="left:385px;top:931px;width:54px;height:13px;background:linear-gradient(#6a6e72,#585c60);border-radius:2px 0 0 0"></div><div class="a" style="left:439px;top:931px;width:1097px;height:13px;background:linear-gradient(#d4d6d8,#c4c6c8)"></div><svg class="a" style="left:388px;top:933px" width="50" height="11"><path d="M2 2H3M6 2H7M2 6H3M6 6H7" stroke="#aaa" stroke-width="2"/><path d="M13 7L19 13M19 7L13 13" stroke="#ddd" stroke-width="1.5"/><circle cx="38" cy="7" r="3" fill="none" stroke="#eee" stroke-width="2"/></svg><div class="a" style="left:444px;top:936px;width:14px;height:8px;border:1px solid #666;background:#999"></div><div class="t" style="left:479px;top:935px;font-size:12px;color:#8a8a8a;"><span class="c">键入命令</span></div><div class="a" style="left:0;top:2px;width:17px;height:539px;background:linear-gradient(90deg,#d8d8d8,#cfcfcf)"></div><div class="a" style="left:14px;top:1px;width:271px;height:540px;background:#e4e4e4;border-right:1px solid #3a3a3a"></div><div class="a" style="left:16px;top:3px;width:266px;height:536px;background:#f0f0f0;border:1px solid #6e6e6e;border-radius:5px 5px 0 0"></div><svg class="a" style="left:2px;top:6px" width="11" height="10"><path d="M1 1L10 9M10 1L1 9" stroke="#111" stroke-width="2.2"/></svg><svg class="a" style="left:0;top:24px" width="14" height="12"><path d="M0 5L5 0.5V9.5Z M8 0.5L13 5L8 9.5Z" fill="#111"/></svg><div class="a" style="left:0;top:42px;width:12px;height:11px;border:2px solid #111;border-left:5px solid #111;background:#eee"></div><div class="a" style="left:6px;top:46px;width:5px;height:1px;background:#111"></div><div class="t" style="left:-7px;top:494px;font-size:11px;color:#111;transform:rotate(90deg);transform-origin:12px 6px;width:24px"><span class="c">特性</span></div><div class="a" style="left:0;top:522px;width:11px;height:16px;border:1px solid #333;background:#fff"></div><div class="a" style="left:1px;top:524px;width:8px;height:6px;background:#3b6eb0"></div><div class="a" style="left:40px;top:16px;width:151px;height:24px;border:1px solid #8a8a8a;border-radius:3px;background:linear-gradient(#fbfbfb,#dedede)"></div><div class="t" style="left:43px;top:21px;font-size:13px;color:#111"><span class="c">文字</span> (130)</div><svg class="a" style="left:178px;top:25px" width="9" height="6"><path d="M0 0H9L4.5 5Z" fill="#111"/></svg><div class="a" style="left:194px;top:16px;width:76px;height:24px;border:1px solid #b3b3b3;background:#f2f2f2"></div><div class="a" style="left:219px;top:16px;width:1px;height:24px;background:#b3b3b3"></div><div class="a" style="left:244px;top:16px;width:1px;height:24px;background:#b3b3b3"></div><div class="a" style="left:199px;top:20px;width:16px;height:16px;border:1px dotted #333"></div><div class="a" style="left:206px;top:23px;width:3px;height:10px;background:#1a9a2a"></div><div class="a" style="left:202px;top:26px;width:10px;height:3px;background:#1a9a2a"></div><div class="a" style="left:229px;top:21px;width:7px;height:8px;background:#8fd07a;border:1px solid #2f6f2a"></div><svg class="a" style="left:223px;top:20px" width="20" height="18"><circle cx="6" cy="10" r="4" fill="none" stroke="#555" stroke-width="1.3"/><path d="M10 6L10 17L12.5 14.5L15 18L16.5 17L14 13.5H17Z" fill="#fff" stroke="#111" stroke-width="1"/></svg><svg class="a" style="left:248px;top:19px" width="20" height="19"><rect x="1" y="2" width="8" height="11" fill="#8fd07a" stroke="#2f6f2a"/><path d="M15 1L11 7H14L12 11L17 5H14Z" fill="#f0b010"/><path d="M6 6L6 17L8.5 14.5L11 18L12.5 17L10 13.5H13Z" fill="#fff" stroke="#111" stroke-width="1"/></svg><div class="a" style="left:20px;top:46px;width:10px;height:359px;background:#acacac"></div><div class="a" style="left:20px;top:405px;width:10px;height:131px;background:linear-gradient(90deg,#d6d6d6,#e4e4e4)"></div><div class="a" style="left:37px;top:46.6px;width:231px;height:21px;background:linear-gradient(#d2d2d2,#a4a4a4)"></div><div class="t" style="left:41px;top:50.6px;font-size:13px;font-weight:bold;color:#111"><span class="c">常规</span></div><svg class="a" style="left:248px;top:53.6px" width="10" height="6"><path d="M0 6H10L5 0Z" fill="#111"/></svg><div class="a" style="left:54px;top:67.8px;width:214px;height:189.4px;background:#fff;border-left:1px solid #8f8f8f;border-right:1px solid #9a9a9a;border-bottom:1px solid #8f8f8f"></div><div class="a" style="left:55px;top:67.8px;width:95px;height:188.4px;background:#efefef"></div><div class="a" style="left:150px;top:67.8px;width:1px;height:188.4px;background:#a2a2a2"></div><div class="t" style="left:58px;top:72.8px;font-size:12px;color:#111"><span class="c">颜色</span></div><div class="t" style="left:170px;top:72.8px;font-size:12px;color:#111">ByLayer</div><div class="a" style="left:54px;top:88.7px;width:214px;height:1px;background:#a9a9a9"></div><div class="t" style="left:58px;top:93.7px;font-size:12px;color:#111"><span class="c">图层</span></div><div class="t" style="left:152px;top:93.7px;font-size:12px;color:#111">*<span class="c">多种</span>*</div><div class="a" style="left:54px;top:109.7px;width:214px;height:1px;background:#a9a9a9"></div><div class="t" style="left:58px;top:114.7px;font-size:12px;color:#111"><span class="c">线型</span></div><div class="t" style="left:152px;top:114.7px;font-size:12px;color:#111">*<span class="c">多种</span>*</div><div class="a" style="left:54px;top:130.6px;width:214px;height:1px;background:#a9a9a9"></div><div class="t" style="left:58px;top:135.6px;font-size:12px;color:#111"><span class="c">线型比例</span></div><div class="t" style="left:154px;top:135.6px;font-size:12px;color:#111">1.0000</div><div class="a" style="left:54px;top:151.5px;width:214px;height:1px;background:#a9a9a9"></div><div class="t" style="left:58px;top:156.5px;font-size:12px;color:#111"><span class="c">打印样式</span></div><div class="t" style="left:154px;top:156.5px;font-size:12px;color:#111">ByColor</div><div class="a" style="left:54px;top:172.4px;width:214px;height:1px;background:#a9a9a9"></div><div class="t" style="left:58px;top:177.4px;font-size:12px;color:#111"><span class="c">线宽</span></div><div class="a" style="left:156px;top:183.4px;width:48px;height:1px;background:#111"></div><div class="t" style="left:209px;top:177.4px;font-size:12px;color:#111">ByLayer</div><div class="a" style="left:54px;top:193.4px;width:214px;height:1px;background:#a9a9a9"></div><div class="t" style="left:58px;top:198.4px;font-size:12px;color:#111"><span class="c">透明度</span></div><div class="t" style="left:154px;top:198.4px;font-size:12px;color:#111">ByLayer</div><div class="a" style="left:54px;top:214.3px;width:214px;height:1px;background:#a9a9a9"></div><div class="t" style="left:58px;top:219.3px;font-size:12px;color:#111"><span class="c">超链接</span></div><div class="t" style="left:154px;top:219.3px;font-size:12px;color:#111"></div><div class="a" style="left:54px;top:235.2px;width:214px;height:1px;background:#a9a9a9"></div><div class="t" style="left:58px;top:240.2px;font-size:12px;color:#111"><span class="c">厚度</span></div><div class="t" style="left:154px;top:240.2px;font-size:12px;color:#111">0.0000</div><div class="a" style="left:37px;top:260.2px;width:231px;height:21px;background:linear-gradient(#d2d2d2,#a4a4a4)"></div><div class="t" style="left:41px;top:264.2px;font-size:13px;font-weight:bold;color:#111"><span class="c">三维效果</span></div><svg class="a" style="left:248px;top:267.2px" width="10" height="6"><path d="M0 6H10L5 0Z" fill="#111"/></svg><div class="a" style="left:54px;top:281.6px;width:214px;height:21.9px;background:#fff;border-left:1px solid #8f8f8f;border-right:1px solid #9a9a9a;border-bottom:1px solid #8f8f8f"></div><div class="a" style="left:55px;top:281.6px;width:95px;height:20.9px;background:#efefef"></div><div class="a" style="left:150px;top:281.6px;width:1px;height:20.9px;background:#a2a2a2"></div><div class="t" style="left:58px;top:286.6px;font-size:12px;color:#111"><span class="c">材质</span></div><div class="t" style="left:154px;top:286.6px;font-size:12px;color:#111">ByLayer</div><div class="a" style="left:37px;top:306.3px;width:231px;height:21px;background:linear-gradient(#d2d2d2,#a4a4a4)"></div><div class="t" style="left:41px;top:310.3px;font-size:13px;font-weight:bold;color:#111"><span class="c">文字</span></div><svg class="a" style="left:248px;top:313.3px" width="10" height="6"><path d="M0 6H10L5 0Z" fill="#111"/></svg><div class="a" style="left:54px;top:327.7px;width:214px;height:210.3px;background:#fff;border-left:1px solid #8f8f8f;border-right:1px solid #9a9a9a;border-bottom:1px solid #8f8f8f"></div><div class="a" style="left:55px;top:327.7px;width:95px;height:209.3px;background:#efefef"></div><div class="a" style="left:150px;top:327.7px;width:1px;height:209.3px;background:#a2a2a2"></div><div class="t" style="left:58px;top:332.7px;font-size:12px;color:#111"><span class="c">内容</span></div><div class="t" style="left:152px;top:332.7px;font-size:12px;color:#111">*<span class="c">多种</span>*</div><div class="a" style="left:54px;top:348.6px;width:214px;height:1px;background:#a9a9a9"></div><div class="a" style="left:55px;top:349.6px;width:95px;height:20px;background:#3399ff"></div><div class="a" style="left:151px;top:349.6px;width:116px;height:20px;background:linear-gradient(#f8f8f8,#dedede);border:1px solid #3399ff"></div><svg class="a" style="left:257px;top:357.6px" width="8" height="5"><path d="M0 0H8L4 4.5Z" fill="#111"/></svg><div class="t" style="left:58px;top:353.6px;font-size:12px;color:#fff"><span class="c">样式</span></div><div class="t" style="left:154px;top:353.6px;font-size:12px;color:#111">STANDARD</div><div class="a" style="left:54px;top:369.6px;width:214px;height:1px;background:#a9a9a9"></div><div class="t" style="left:58px;top:374.6px;font-size:12px;color:#111"><span class="c">注释性</span></div><div class="t" style="left:154px;top:374.6px;font-size:12px;color:#111"><span class="c">否</span></div><div class="a" style="left:54px;top:390.5px;width:214px;height:1px;background:#a9a9a9"></div><div class="t" style="left:58px;top:395.5px;font-size:12px;color:#111"><span class="c">对正</span></div><div class="t" style="left:152px;top:395.5px;font-size:12px;color:#111">*<span class="c">多种</span>*</div><div class="a" style="left:54px;top:411.4px;width:214px;height:1px;background:#a9a9a9"></div><div class="t" style="left:58px;top:416.4px;font-size:12px;color:#111"><span class="c">高度</span></div><div class="t" style="left:152px;top:416.4px;font-size:12px;color:#111">*<span class="c">多种</span>*</div><div class="a" style="left:54px;top:432.4px;width:214px;height:1px;background:#a9a9a9"></div><div class="t" style="left:58px;top:437.4px;font-size:12px;color:#111"><span class="c">旋转</span></div><div class="t" style="left:154px;top:437.4px;font-size:12px;color:#111">0</div><div class="a" style="left:54px;top:453.3px;width:214px;height:1px;background:#a9a9a9"></div><div class="t" style="left:58px;top:458.3px;font-size:12px;color:#111"><span class="c">宽度因子</span></div><div class="t" style="left:154px;top:458.3px;font-size:12px;color:#111">1.0000</div><div class="a" style="left:54px;top:474.2px;width:214px;height:1px;background:#a9a9a9"></div><div class="t" style="left:58px;top:479.2px;font-size:12px;color:#111"><span class="c">倾斜</span></div><div class="t" style="left:154px;top:479.2px;font-size:12px;color:#111">0</div><div class="a" style="left:54px;top:495.1px;width:214px;height:1px;background:#a9a9a9"></div><div class="t" style="left:58px;top:500.1px;font-size:12px;color:#111"><span class="c">文字对齐</span> X <span class="c">坐标</span></div><div class="t" style="left:152px;top:500.1px;font-size:12px;color:#111">*<span class="c">多种</span>*</div><div class="a" style="left:54px;top:516.1px;width:214px;height:1px;background:#a9a9a9"></div><div class="t" style="left:58px;top:521.1px;font-size:12px;color:#111"><span class="c">文字对齐</span> Y <span class="c">坐标</span></div><div class="t" style="left:152px;top:521.1px;font-size:12px;color:#111">*<span class="c">多种</span>*</div></body></html>
